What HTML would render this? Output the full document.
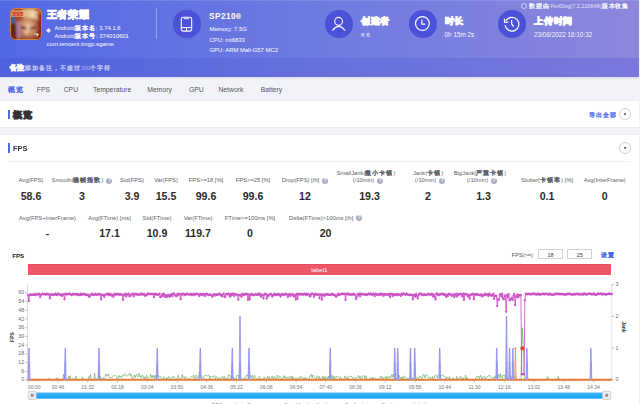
<!DOCTYPE html>
<html><head><meta charset="utf-8"><style>
html,body{margin:0;padding:0;}
body{width:640px;height:404px;overflow:hidden;position:relative;background:#f2f3f8;font-family:"Liberation Sans", sans-serif;}
.t{position:absolute;white-space:nowrap;}
svg{display:block;}
.cj{font-size:1.1em;letter-spacing:0.159em;-webkit-text-stroke:0.4px currentColor;}
.b .cj{font-size:1.2em;letter-spacing:0.083em;-webkit-text-stroke:0.9px currentColor;}
.q{display:inline-block;width:6px;height:6px;border-radius:50%;background:#a9aec2;color:#fff;font-size:4.6px;line-height:6px;text-align:center;vertical-align:middle;margin-left:3px;font-weight:bold;}
</style></head><body>
<div style="position:absolute;left:0;top:0;width:639px;height:58px;background:linear-gradient(90deg,#5368e4 0%,#6e7ae0 48%,#8c87dc 100%);"></div>
<div style="position:absolute;left:0;top:0;width:639px;height:1px;background:rgba(255,255,255,0.12);"></div>
<div style="position:absolute;left:0;top:58px;width:639px;height:19px;background:linear-gradient(90deg,#4e61dc 0%,#6670dc 48%,#7a78dc 100%);"></div>
<div style="position:absolute;left:10px;top:8px;width:32px;height:32px;"><svg width="32" height="32" viewBox="0 0 32 32"><defs><filter id="bl" x="-20%" y="-20%" width="140%" height="140%"><feGaussianBlur stdDeviation="0.9"/></filter><clipPath id="ic"><rect x="0" y="0" width="32" height="32" rx="5.5"/></clipPath><radialGradient id="face" cx="0.5" cy="0.4" r="0.6"><stop offset="0" stop-color="#f0d0b0"/><stop offset="0.5" stop-color="#d09068"/><stop offset="1" stop-color="#8a4a30"/></radialGradient><linearGradient id="hair" x1="0" y1="0" x2="1" y2="0"><stop offset="0" stop-color="#d8a870"/><stop offset="0.6" stop-color="#f0d8b0"/><stop offset="1" stop-color="#b86840"/></linearGradient><linearGradient id="bgc" x1="0" y1="0" x2="1" y2="1"><stop offset="0" stop-color="#9a3820"/><stop offset="0.5" stop-color="#b04a28"/><stop offset="1" stop-color="#8a2a18"/></linearGradient></defs><g clip-path="url(#ic)"><g filter="url(#bl)"><rect x="-2" y="-2" width="36" height="36" fill="url(#bgc)"/><path d="M0 8 L5 8 L5 15 L0 16 Z" fill="#4a5aa0"/><path d="M0 16 L6 15 L7 34 L0 34 Z" fill="#6a2414"/><path d="M12 2 Q22 -1 30 4 L31 14 Q24 10 14 12 Z" fill="url(#hair)"/><path d="M8 14 Q10 9 17 10 L26 11 Q29 18 27 26 Q24 33 17 33 Q9 31 8 23 Z" fill="url(#face)"/><path d="M6 14 L10 13 L11 29 L7 31 Z" fill="#b088b8" opacity="0.75"/><path d="M11 18 L17 19.5 L16 21.5 L11 20.5 Z" fill="#5a2018"/><path d="M20 19.5 L26 18 L26 20.5 L20 21.5 Z" fill="#5a2a20"/><path d="M15 22 L18 21 L18 26 L15 26 Z" fill="#e8c0a0"/><path d="M13 28 Q18 30 23 27.5 L22 31 Q18 32 14 31 Z" fill="#a85a44"/><path d="M28 6 L34 4 L34 34 L25 34 Q30 22 28 6 Z" fill="#8a2614"/></g><path d="M1.5 2 L15.5 2 L14.5 9 L0.5 9 Z" fill="#f0c890" opacity="0.55"/><text x="2.5" y="8" font-size="6.2" font-weight="bold" font-style="italic" fill="#e02e1a" font-family="Liberation Sans">5V5</text><path d="M23.5 25 L29 26 L26.5 30 L27 27.5 Z" fill="#f4eaea" opacity="0.9"/></g><rect x="0.4" y="0.4" width="31.2" height="31.2" rx="5.5" fill="none" stroke="#e89a48" stroke-width="0.8"/></svg></div>
<div class="t b" style="left:46.60px;top:10.14px;font-size:8px;line-height:9.60px;color:#ffffff;font-weight:bold;"><span class="cj">王者荣耀</span></div>
<div style="position:absolute;left:46px;top:27.5px;width:5px;height:5px;"><svg width="5" height="5" viewBox="0 0 5 5"><path d="M2.5 0 L5 2.5 L2.5 5 L0 2.5 Z" fill="rgba(255,255,255,0.85)"/></svg></div>
<div class="t" style="left:54.60px;top:24.24px;font-size:5.9px;line-height:7.08px;color:#ffffff;font-weight:normal;">Android<span class="cj">版本名</span>: 3.74.1.6</div>
<div class="t" style="left:54.60px;top:31.74px;font-size:5.9px;line-height:7.08px;color:#ffffff;font-weight:normal;">Android<span class="cj">版本号</span>: 374010601</div>
<div class="t" style="left:46.60px;top:41.08px;font-size:6.0px;line-height:7.20px;color:#ffffff;font-weight:normal;">com.tencent.tmgp.sgame</div>
<div style="position:absolute;left:156px;top:8px;width:1px;height:31px;background:rgba(255,255,255,0.35);"></div>
<div style="position:absolute;left:173.30px;top:10.30px;width:27.4px;height:27.4px;border-radius:50%;background:#4b52d9;"><svg width="27.4" height="27.4" viewBox="0 0 27.4 27.4" style="position:absolute;left:0;top:0"><rect x="8.3" y="7.2" width="10.4" height="13.9" rx="1.8" fill="none" stroke="#fff" stroke-width="1.1"/><line x1="10.6" y1="8.7" x2="16.1" y2="8.7" stroke="#fff" stroke-width="0.9"/><line x1="8.3" y1="17.6" x2="18.7" y2="17.6" stroke="#fff" stroke-width="1"/><line x1="13.5" y1="17.6" x2="13.5" y2="21" stroke="#fff" stroke-width="1"/></svg></div>
<div class="t b" style="left:209.10px;top:12.13px;font-size:8.2px;line-height:9.84px;color:#ffffff;font-weight:bold;letter-spacing:0.5px;">SP210</div>
<div style="position:absolute;left:235.6px;top:13.2px;width:5.6px;height:5.6px;border-radius:50%;background:#c9c6d0;"></div>
<div class="t" style="left:209.50px;top:26.44px;font-size:5.9px;line-height:7.08px;color:#ffffff;font-weight:normal;">Memory: 7.5G</div>
<div class="t" style="left:209.50px;top:36.94px;font-size:5.9px;line-height:7.08px;color:#ffffff;font-weight:normal;">CPU: mt6833</div>
<div class="t" style="left:209.50px;top:46.84px;font-size:5.9px;line-height:7.08px;color:#ffffff;font-weight:normal;">GPU: ARM Mali-G57 MC2</div>
<div style="position:absolute;left:325.20px;top:10.30px;width:27.4px;height:27.4px;border-radius:50%;background:#4b52d9;"><svg width="27.4" height="27.4" viewBox="0 0 27.4 27.4" style="position:absolute;left:0;top:0"><circle cx="13.6" cy="11.3" r="3.9" fill="none" stroke="#fff" stroke-width="1.1"/><path d="M7.6 20.3 Q13.6 12.5 19.8 20.3" fill="none" stroke="#fff" stroke-width="1.1" stroke-linecap="round"/></svg></div>
<div class="t b" style="left:360.90px;top:16.91px;font-size:7.7px;line-height:9.24px;color:#ffffff;font-weight:bold;"><span class="cj">创建者</span></div>
<div class="t" style="left:360.90px;top:30.87px;font-size:6.2px;line-height:7.44px;color:#ffffff;font-weight:normal;">б б</div>
<div style="position:absolute;left:409.20px;top:10.30px;width:27.4px;height:27.4px;border-radius:50%;background:#4b52d9;"><svg width="27.4" height="27.4" viewBox="0 0 27.4 27.4" style="position:absolute;left:0;top:0"><circle cx="13.4" cy="13.5" r="6.9" fill="none" stroke="#fff" stroke-width="1.2"/><path d="M12.9 9.6 L12.9 14.1 L16.2 14.1" fill="none" stroke="#fff" stroke-width="1.2"/></svg></div>
<div class="t b" style="left:444.60px;top:16.91px;font-size:7.7px;line-height:9.24px;color:#ffffff;font-weight:bold;"><span class="cj">时长</span></div>
<div class="t" style="left:444.60px;top:30.98px;font-size:6.35px;line-height:7.62px;color:rgba(255,255,255,0.95);font-weight:normal;">0h 15m 2s</div>
<div style="position:absolute;left:498.40px;top:10.30px;width:27.4px;height:27.4px;border-radius:50%;background:#4b52d9;"><svg width="27.4" height="27.4" viewBox="0 0 27.4 27.4" style="position:absolute;left:0;top:0"><path d="M8.2 10.4 A6.9 6.9 0 1 1 7.2 15.6" fill="none" stroke="#fff" stroke-width="1.2" stroke-linecap="round"/><path d="M6.4 8.6 L6.6 12.4 L10.3 12.2" fill="none" stroke="#fff" stroke-width="1.2"/><path d="M13.6 10 L13.8 14.2 L15.8 16.6" fill="none" stroke="#fff" stroke-width="1.2"/></svg></div>
<div class="t b" style="left:534.00px;top:16.91px;font-size:7.7px;line-height:9.24px;color:#ffffff;font-weight:bold;"><span class="cj">上传时间</span></div>
<div class="t" style="left:534.00px;top:30.98px;font-size:6.35px;line-height:7.62px;color:rgba(255,255,255,0.95);font-weight:normal;">23/08/2022 16:10:32</div>
<div style="position:absolute;left:521.3px;top:3.2px;width:4px;height:4px;border-radius:50%;border:0.6px solid rgba(255,255,255,0.6);"></div>
<div class="t" style="left:529.30px;top:3.37px;font-size:5.5px;line-height:6.60px;color:rgba(255,255,255,0.8);font-weight:normal;word-spacing:0;"><span class="cj">数据由</span>PerfDog(7.2.220648)<span class="cj">版本收集</span></div>
<div class="t b" style="left:9.75px;top:65.36px;font-size:5.6px;line-height:6.72px;color:#ffffff;font-weight:bold;"><span class="cj">备注</span>:</div>
<div class="t" style="left:25.30px;top:65.36px;font-size:5.6px;line-height:6.72px;color:rgba(255,255,255,0.5);font-weight:normal;"><span class="cj">添加备注，不超过</span>200<span class="cj">个字符</span></div>
<div style="position:absolute;left:0;top:77px;width:639px;height:3px;background:linear-gradient(#dedff2,#f2f3f8);"></div>
<div class="t" style="left:8.20px;top:86.12px;font-size:6.8px;line-height:8.16px;color:#4d6ae6;font-weight:normal;"><span class="cj">概览</span></div>
<div class="t" style="left:36.80px;top:86.12px;font-size:6.8px;line-height:8.16px;color:#555;font-weight:normal;">FPS</div>
<div class="t" style="left:63.70px;top:86.12px;font-size:6.8px;line-height:8.16px;color:#555;font-weight:normal;">CPU</div>
<div class="t" style="left:93.00px;top:86.12px;font-size:6.8px;line-height:8.16px;color:#555;font-weight:normal;">Temperature</div>
<div class="t" style="left:147.30px;top:86.12px;font-size:6.8px;line-height:8.16px;color:#555;font-weight:normal;">Memory</div>
<div class="t" style="left:189.00px;top:86.12px;font-size:6.8px;line-height:8.16px;color:#555;font-weight:normal;">GPU</div>
<div class="t" style="left:218.40px;top:86.12px;font-size:6.8px;line-height:8.16px;color:#555;font-weight:normal;">Network</div>
<div class="t" style="left:260.70px;top:86.12px;font-size:6.8px;line-height:8.16px;color:#555;font-weight:normal;">Battery</div>
<div style="position:absolute;left:0;top:100px;width:639px;height:1px;background:#ededf4;"></div>
<div style="position:absolute;left:0;top:101px;width:639px;height:26px;background:#fff;"></div>
<div style="position:absolute;left:0;top:127px;width:639px;height:1px;background:#e8e9f4;"></div>
<div style="position:absolute;left:0;top:134px;width:639px;height:1px;background:#ebecf5;"></div>
<div style="position:absolute;left:8px;top:110px;width:2px;height:9.2px;background:#4d6ae6;"></div>
<div class="t b" style="left:13.00px;top:111.22px;font-size:7.5px;line-height:9.00px;color:#333;font-weight:bold;"><span class="cj">概览</span></div>
<div class="t" style="left:589.20px;top:112.18px;font-size:5.3px;line-height:6.36px;color:#5a78f0;font-weight:normal;"><span class="cj">导出全部</span></div>
<div style="position:absolute;left:619.30px;top:108.40px;width:12px;height:12px;"><svg width="12" height="12" viewBox="0 0 12 12"><circle cx="6" cy="6" r="5.5" fill="#fff" stroke="#c4c4c8" stroke-width="0.8"/><path d="M4.6 6 L6.6 4.6 L6.6 7.4 Z" fill="#333"/></svg></div>
<div style="position:absolute;left:0;top:135px;width:639px;height:269px;background:#fff;"></div>
<div style="position:absolute;left:8px;top:142.6px;width:2px;height:10px;background:#4d6ae6;"></div>
<div class="t b" style="left:13.00px;top:143.64px;font-size:8px;line-height:9.60px;color:#333;font-weight:bold;transform:scaleX(0.92);transform-origin:left;">FPS</div>
<div style="position:absolute;left:619.30px;top:141.80px;width:12px;height:12px;"><svg width="12" height="12" viewBox="0 0 12 12"><circle cx="6" cy="6" r="5.5" fill="#fff" stroke="#c4c4c8" stroke-width="0.8"/><path d="M4.6 5.2 L7.4 5.2 L6 7.2 Z" fill="#333"/></svg></div>
<div style="position:absolute;left:8px;top:160.5px;width:623px;height:1px;background:#eeeef2;"></div>
<div class="t" style="left:-269.00px;width:600px;text-align:center;top:177.49px;font-size:5.8px;line-height:6.96px;color:#5c6068;font-weight:normal;">Avg(FPS)</div>
<div class="t b" style="left:-269.00px;width:600px;text-align:center;top:189.91px;font-size:10.6px;line-height:12.72px;color:#2b2b2b;font-weight:bold;">58.6</div>
<div class="t" style="left:-218.00px;width:600px;text-align:center;top:177.49px;font-size:5.8px;line-height:6.96px;color:#5c6068;font-weight:normal;">Smooth(<span class="cj">稳帧指数</span>)<span class="q">?</span></div>
<div class="t b" style="left:-218.00px;width:600px;text-align:center;top:189.91px;font-size:10.6px;line-height:12.72px;color:#2b2b2b;font-weight:bold;">3</div>
<div class="t" style="left:-168.00px;width:600px;text-align:center;top:177.49px;font-size:5.8px;line-height:6.96px;color:#5c6068;font-weight:normal;">Std(FPS)</div>
<div class="t b" style="left:-168.00px;width:600px;text-align:center;top:189.91px;font-size:10.6px;line-height:12.72px;color:#2b2b2b;font-weight:bold;">3.9</div>
<div class="t" style="left:-134.00px;width:600px;text-align:center;top:177.49px;font-size:5.8px;line-height:6.96px;color:#5c6068;font-weight:normal;">Var(FPS)</div>
<div class="t b" style="left:-134.00px;width:600px;text-align:center;top:189.91px;font-size:10.6px;line-height:12.72px;color:#2b2b2b;font-weight:bold;">15.5</div>
<div class="t" style="left:-94.00px;width:600px;text-align:center;top:177.49px;font-size:5.8px;line-height:6.96px;color:#5c6068;font-weight:normal;">FPS&gt;=18 [%]</div>
<div class="t b" style="left:-94.00px;width:600px;text-align:center;top:189.91px;font-size:10.6px;line-height:12.72px;color:#2b2b2b;font-weight:bold;">99.6</div>
<div class="t" style="left:-47.00px;width:600px;text-align:center;top:177.49px;font-size:5.8px;line-height:6.96px;color:#5c6068;font-weight:normal;">FPS&gt;=25 [%]</div>
<div class="t b" style="left:-47.00px;width:600px;text-align:center;top:189.91px;font-size:10.6px;line-height:12.72px;color:#2b2b2b;font-weight:bold;">99.6</div>
<div class="t" style="left:5.00px;width:600px;text-align:center;top:177.49px;font-size:5.8px;line-height:6.96px;color:#5c6068;font-weight:normal;">Drop(FPS) [/h]<span class="q">?</span></div>
<div class="t b" style="left:5.00px;width:600px;text-align:center;top:189.91px;font-size:10.6px;line-height:12.72px;color:#2b2b2b;font-weight:bold;">12</div>
<div class="t" style="left:66.00px;width:600px;text-align:center;top:169.99px;font-size:5.8px;line-height:6.96px;color:#5c6068;font-weight:normal;">SmallJank(<span class="cj">微小卡顿</span>)</div>
<div class="t" style="left:68.00px;width:600px;text-align:center;top:177.49px;font-size:5.8px;line-height:6.96px;color:#5c6068;font-weight:normal;">(/10min)<span class="q">?</span></div>
<div class="t b" style="left:69.50px;width:600px;text-align:center;top:189.91px;font-size:10.6px;line-height:12.72px;color:#2b2b2b;font-weight:bold;">19.3</div>
<div class="t" style="left:128.00px;width:600px;text-align:center;top:169.99px;font-size:5.8px;line-height:6.96px;color:#5c6068;font-weight:normal;">Jank(<span class="cj">卡顿</span>)</div>
<div class="t" style="left:130.00px;width:600px;text-align:center;top:177.49px;font-size:5.8px;line-height:6.96px;color:#5c6068;font-weight:normal;">(/10min)<span class="q">?</span></div>
<div class="t b" style="left:128.00px;width:600px;text-align:center;top:189.91px;font-size:10.6px;line-height:12.72px;color:#2b2b2b;font-weight:bold;">2</div>
<div class="t" style="left:180.00px;width:600px;text-align:center;top:169.99px;font-size:5.8px;line-height:6.96px;color:#5c6068;font-weight:normal;">BigJank(<span class="cj">严重卡顿</span>)</div>
<div class="t" style="left:182.00px;width:600px;text-align:center;top:177.49px;font-size:5.8px;line-height:6.96px;color:#5c6068;font-weight:normal;">(/10min)<span class="q">?</span></div>
<div class="t b" style="left:183.50px;width:600px;text-align:center;top:189.91px;font-size:10.6px;line-height:12.72px;color:#2b2b2b;font-weight:bold;">1.3</div>
<div class="t" style="left:247.00px;width:600px;text-align:center;top:177.49px;font-size:5.8px;line-height:6.96px;color:#5c6068;font-weight:normal;">Stutter(<span class="cj">卡顿率</span>) [%]</div>
<div class="t b" style="left:247.00px;width:600px;text-align:center;top:189.91px;font-size:10.6px;line-height:12.72px;color:#2b2b2b;font-weight:bold;">0.1</div>
<div class="t" style="left:304.70px;width:600px;text-align:center;top:177.49px;font-size:5.8px;line-height:6.96px;color:#5c6068;font-weight:normal;">Avg(InterFrame)</div>
<div class="t b" style="left:304.70px;width:600px;text-align:center;top:189.91px;font-size:10.6px;line-height:12.72px;color:#2b2b2b;font-weight:bold;">0</div>
<div class="t" style="left:-252.50px;width:600px;text-align:center;top:214.99px;font-size:5.8px;line-height:6.96px;color:#5c6068;font-weight:normal;">Avg(FPS+InterFrame)</div>
<div class="t b" style="left:-252.50px;width:600px;text-align:center;top:226.91px;font-size:10.6px;line-height:12.72px;color:#2b2b2b;font-weight:bold;">-</div>
<div class="t" style="left:-190.50px;width:600px;text-align:center;top:214.99px;font-size:5.8px;line-height:6.96px;color:#5c6068;font-weight:normal;">Avg(FTime) [ms]</div>
<div class="t b" style="left:-190.50px;width:600px;text-align:center;top:226.91px;font-size:10.6px;line-height:12.72px;color:#2b2b2b;font-weight:bold;">17.1</div>
<div class="t" style="left:-143.00px;width:600px;text-align:center;top:214.99px;font-size:5.8px;line-height:6.96px;color:#5c6068;font-weight:normal;">Std(FTime)</div>
<div class="t b" style="left:-143.00px;width:600px;text-align:center;top:226.91px;font-size:10.6px;line-height:12.72px;color:#2b2b2b;font-weight:bold;">10.9</div>
<div class="t" style="left:-102.00px;width:600px;text-align:center;top:214.99px;font-size:5.8px;line-height:6.96px;color:#5c6068;font-weight:normal;">Var(FTime)</div>
<div class="t b" style="left:-102.00px;width:600px;text-align:center;top:226.91px;font-size:10.6px;line-height:12.72px;color:#2b2b2b;font-weight:bold;">119.7</div>
<div class="t" style="left:-50.00px;width:600px;text-align:center;top:214.99px;font-size:5.8px;line-height:6.96px;color:#5c6068;font-weight:normal;">FTime&gt;=100ms [%]</div>
<div class="t b" style="left:-50.00px;width:600px;text-align:center;top:226.91px;font-size:10.6px;line-height:12.72px;color:#2b2b2b;font-weight:bold;">0</div>
<div class="t" style="left:25.60px;width:600px;text-align:center;top:214.99px;font-size:5.8px;line-height:6.96px;color:#5c6068;font-weight:normal;">Delta(FTime)&gt;100ms [/h]<span class="q">?</span></div>
<div class="t b" style="left:25.60px;width:600px;text-align:center;top:226.91px;font-size:10.6px;line-height:12.72px;color:#2b2b2b;font-weight:bold;">20</div>
<div class="t b" style="left:12.20px;top:251.57px;font-size:6.2px;line-height:7.44px;color:#1a1a1a;font-weight:bold;">FPS</div>
<div class="t" style="left:511.80px;top:251.61px;font-size:5.6px;line-height:6.72px;color:#555;font-weight:normal;">FPS(&gt;=)</div>
<div style="position:absolute;left:537.6px;top:249.4px;width:25.5px;height:9.3px;box-sizing:border-box;border:0.8px solid #d0d0d0;background:#fff;"></div>
<div class="t" style="left:250.50px;width:600px;text-align:center;top:251.72px;font-size:5.4px;line-height:6.48px;color:#333;font-weight:normal;">18</div>
<div style="position:absolute;left:566.9px;top:249.4px;width:25.5px;height:9.3px;box-sizing:border-box;border:0.8px solid #d0d0d0;background:#fff;"></div>
<div class="t" style="left:279.80px;width:600px;text-align:center;top:251.72px;font-size:5.4px;line-height:6.48px;color:#333;font-weight:normal;">25</div>
<div class="t" style="left:600.60px;top:251.84px;font-size:5.2px;line-height:6.24px;color:#3a64f0;font-weight:normal;"><span class="cj">设置</span></div>
<div style="position:absolute;left:27.7px;top:264.4px;width:583px;height:10.7px;background:#ef5668;border-top:1px solid #e84a5e;box-sizing:border-box;"></div>
<div class="t" style="left:19.30px;width:600px;text-align:center;top:266.78px;font-size:6px;line-height:7.20px;color:#fff;font-weight:normal;">label1</div>
<svg style="position:absolute;left:0;top:0" width="640" height="404" viewBox="0 0 640 404"><line x1="27.5" y1="284" x2="27.5" y2="380" stroke="#dde0ea" stroke-width="1"/><line x1="611.8" y1="284" x2="611.8" y2="380" stroke="#dde0ea" stroke-width="1"/><line x1="25" y1="380.00" x2="27.5" y2="380.00" stroke="#aaa" stroke-width="0.6"/><line x1="25" y1="371.29" x2="27.5" y2="371.29" stroke="#aaa" stroke-width="0.6"/><line x1="25" y1="362.58" x2="27.5" y2="362.58" stroke="#aaa" stroke-width="0.6"/><line x1="25" y1="353.87" x2="27.5" y2="353.87" stroke="#aaa" stroke-width="0.6"/><line x1="25" y1="345.16" x2="27.5" y2="345.16" stroke="#aaa" stroke-width="0.6"/><line x1="25" y1="336.45" x2="27.5" y2="336.45" stroke="#aaa" stroke-width="0.6"/><line x1="25" y1="327.74" x2="27.5" y2="327.74" stroke="#aaa" stroke-width="0.6"/><line x1="25" y1="319.03" x2="27.5" y2="319.03" stroke="#aaa" stroke-width="0.6"/><line x1="25" y1="310.32" x2="27.5" y2="310.32" stroke="#aaa" stroke-width="0.6"/><line x1="25" y1="301.61" x2="27.5" y2="301.61" stroke="#aaa" stroke-width="0.6"/><line x1="25" y1="292.90" x2="27.5" y2="292.90" stroke="#aaa" stroke-width="0.6"/><line x1="611.8" y1="380.00" x2="614.3" y2="380.00" stroke="#aaa" stroke-width="0.6"/><line x1="611.8" y1="348.20" x2="614.3" y2="348.20" stroke="#aaa" stroke-width="0.6"/><line x1="611.8" y1="316.40" x2="614.3" y2="316.40" stroke="#aaa" stroke-width="0.6"/><line x1="611.8" y1="284.60" x2="614.3" y2="284.60" stroke="#aaa" stroke-width="0.6"/><line x1="28.25" y1="380" x2="28.25" y2="383" stroke="#bbb" stroke-width="0.6"/><line x1="58.00" y1="380" x2="58.00" y2="383" stroke="#bbb" stroke-width="0.6"/><line x1="87.75" y1="380" x2="87.75" y2="383" stroke="#bbb" stroke-width="0.6"/><line x1="117.50" y1="380" x2="117.50" y2="383" stroke="#bbb" stroke-width="0.6"/><line x1="147.25" y1="380" x2="147.25" y2="383" stroke="#bbb" stroke-width="0.6"/><line x1="177.00" y1="380" x2="177.00" y2="383" stroke="#bbb" stroke-width="0.6"/><line x1="206.75" y1="380" x2="206.75" y2="383" stroke="#bbb" stroke-width="0.6"/><line x1="236.50" y1="380" x2="236.50" y2="383" stroke="#bbb" stroke-width="0.6"/><line x1="266.25" y1="380" x2="266.25" y2="383" stroke="#bbb" stroke-width="0.6"/><line x1="296.00" y1="380" x2="296.00" y2="383" stroke="#bbb" stroke-width="0.6"/><line x1="325.75" y1="380" x2="325.75" y2="383" stroke="#bbb" stroke-width="0.6"/><line x1="355.50" y1="380" x2="355.50" y2="383" stroke="#bbb" stroke-width="0.6"/><line x1="385.25" y1="380" x2="385.25" y2="383" stroke="#bbb" stroke-width="0.6"/><line x1="415.00" y1="380" x2="415.00" y2="383" stroke="#bbb" stroke-width="0.6"/><line x1="444.75" y1="380" x2="444.75" y2="383" stroke="#bbb" stroke-width="0.6"/><line x1="474.50" y1="380" x2="474.50" y2="383" stroke="#bbb" stroke-width="0.6"/><line x1="504.25" y1="380" x2="504.25" y2="383" stroke="#bbb" stroke-width="0.6"/><line x1="534.00" y1="380" x2="534.00" y2="383" stroke="#bbb" stroke-width="0.6"/><line x1="563.75" y1="380" x2="563.75" y2="383" stroke="#bbb" stroke-width="0.6"/><line x1="593.50" y1="380" x2="593.50" y2="383" stroke="#bbb" stroke-width="0.6"/><polyline fill="none" stroke="#58a858" stroke-width="0.6" points="28.0,380.0 28.8,380.0 29.6,380.0 30.4,380.0 31.2,380.0 32.1,380.0 32.9,380.0 33.7,380.0 34.5,380.0 35.3,380.0 36.1,380.0 36.9,380.0 37.7,380.0 38.6,380.0 39.4,380.0 40.2,380.0 41.0,380.0 41.8,380.0 42.6,380.0 43.4,380.0 44.2,380.0 45.1,380.0 45.9,380.0 46.7,380.0 47.5,380.0 48.3,377.9 49.1,378.9 49.9,380.0 50.7,380.0 51.5,380.0 52.4,380.0 53.2,380.0 54.0,380.0 54.8,380.0 55.6,380.0 56.4,377.5 57.2,378.3 58.0,378.2 58.9,380.0 59.7,380.0 60.5,380.0 61.3,380.0 62.1,380.0 62.9,380.0 63.7,374.0 64.5,380.0 65.4,380.0 66.2,380.0 67.0,380.0 67.8,380.0 68.6,376.0 69.4,380.0 70.2,375.7 71.0,380.0 71.8,380.0 72.7,380.0 73.5,378.2 74.3,380.0 75.1,380.0 75.9,375.8 76.7,380.0 77.5,380.0 78.3,380.0 79.2,380.0 80.0,380.0 80.8,380.0 81.6,380.0 82.4,376.8 83.2,380.0 84.0,380.0 84.8,380.0 85.6,380.0 86.5,380.0 87.3,380.0 88.1,380.0 88.9,376.5 89.7,378.2 90.5,374.4 91.3,380.0 92.1,380.0 93.0,380.0 93.8,380.0 94.6,373.2 95.4,380.0 96.2,380.0 97.0,380.0 97.8,380.0 98.6,373.6 99.5,380.0 100.3,376.5 101.1,380.0 101.9,380.0 102.7,377.9 103.5,377.5 104.3,380.0 105.1,377.5 105.9,374.0 106.8,376.0 107.6,376.0 108.4,374.0 109.2,377.3 110.0,377.6 110.8,377.4 111.6,378.2 112.4,376.5 113.3,375.4 114.1,376.0 114.9,375.6 115.7,375.5 116.5,376.6 117.3,379.3 118.1,378.0 118.9,375.3 119.8,377.2 120.6,376.0 121.4,377.8 122.2,377.0 123.0,374.8 123.8,375.8 124.6,373.7 125.4,375.3 126.2,375.7 127.1,375.9 127.9,375.8 128.7,374.7 129.5,373.5 130.3,375.7 131.1,374.0 131.9,378.0 132.7,378.4 133.6,378.7 134.4,375.0 135.2,377.5 136.0,374.9 136.8,374.3 137.6,377.0 138.4,376.1 139.2,373.2 140.1,377.3 140.9,375.7 141.7,377.5 142.5,375.1 143.3,376.7 144.1,379.4 144.9,376.7 145.7,379.4 146.5,375.1 147.4,377.8 148.2,378.5 149.0,376.9 149.8,376.7 150.6,374.2 151.4,377.8 152.2,375.3 153.0,377.7 153.9,375.4 154.7,378.5 155.5,375.1 156.3,377.7 157.1,377.8 157.9,375.9 158.7,375.6 159.5,376.8 160.3,376.1 161.2,378.5 162.0,379.3 162.8,378.4 163.6,376.5 164.4,378.1 165.2,379.3 166.0,379.8 166.8,377.4 167.7,380.0 168.5,376.4 169.3,377.0 170.1,378.6 170.9,378.6 171.7,377.1 172.5,378.1 173.3,375.8 174.2,377.1 175.0,379.1 175.8,379.6 176.6,378.3 177.4,379.6 178.2,375.2 179.0,377.9 179.8,378.2 180.6,379.0 181.5,378.5 182.3,374.3 183.1,377.9 183.9,376.9 184.7,378.6 185.5,376.4 186.3,377.8 187.1,378.7 188.0,378.7 188.8,379.0 189.6,378.4 190.4,377.4 191.2,376.6 192.0,376.5 192.8,377.6 193.6,374.9 194.5,376.7 195.3,379.8 196.1,375.2 196.9,375.8 197.7,378.3 198.5,376.4 199.3,374.4 200.1,375.2 200.9,374.7 201.8,377.0 202.6,378.1 203.4,378.5 204.2,375.8 205.0,375.2 205.8,375.7 206.6,374.9 207.4,376.0 208.3,375.2 209.1,375.4 209.9,379.0 210.7,376.2 211.5,376.5 212.3,377.1 213.1,377.3 213.9,375.6 214.8,376.1 215.6,379.1 216.4,376.5 217.2,377.7 218.0,380.0 218.8,377.7 219.6,377.4 220.4,378.5 221.2,378.7 222.1,376.6 222.9,376.2 223.7,380.0 224.5,376.4 225.3,377.5 226.1,379.1 226.9,378.4 227.7,378.6 228.6,374.6 229.4,375.8 230.2,375.4 231.0,378.4 231.8,376.5 232.6,379.6 233.4,377.4 234.2,379.2 235.1,378.6 235.9,379.7 236.7,375.2 237.5,375.3 238.3,375.1 239.1,378.0 239.9,375.1 240.7,378.1 241.5,378.6 242.4,380.0 243.2,378.7 244.0,378.3 244.8,377.3 245.6,378.5 246.4,375.3 247.2,376.1 248.0,374.0 248.9,375.0 249.7,375.6 250.5,375.5 251.3,377.6 252.1,375.1 252.9,377.9 253.7,379.0 254.5,375.3 255.3,377.2 256.2,378.0 257.0,380.0 257.8,380.0 258.6,378.0 259.4,376.4 260.2,377.9 261.0,379.7 261.8,379.3 262.7,379.8 263.5,378.2 264.3,376.8 265.1,378.5 265.9,378.7 266.7,380.0 267.5,376.2 268.3,378.5 269.2,376.6 270.0,379.7 270.8,379.0 271.6,376.3 272.4,376.2 273.2,380.0 274.0,376.3 274.8,377.9 275.6,379.1 276.5,376.3 277.3,375.1 278.1,379.7 278.9,378.2 279.7,375.8 280.5,377.0 281.3,377.5 282.1,379.5 283.0,378.1 283.8,375.5 284.6,378.3 285.4,376.2 286.2,378.5 287.0,377.1 287.8,377.6 288.6,377.0 289.5,379.2 290.3,376.0 291.1,376.1 291.9,379.4 292.7,376.2 293.5,379.1 294.3,378.6 295.1,378.7 295.9,377.7 296.8,379.3 297.6,379.3 298.4,377.6 299.2,377.1 300.0,378.2 300.8,376.2 301.6,377.0 302.4,379.9 303.3,379.2 304.1,377.5 304.9,379.3 305.7,377.3 306.5,379.2 307.3,379.0 308.1,378.7 308.9,379.7 309.8,375.7 310.6,376.0 311.4,374.3 312.2,378.2 313.0,374.8 313.8,375.9 314.6,377.5 315.4,378.8 316.2,379.0 317.1,375.8 317.9,376.3 318.7,379.3 319.5,376.5 320.3,380.0 321.1,378.8 321.9,379.1 322.7,375.8 323.6,378.9 324.4,376.7 325.2,380.0 326.0,376.5 326.8,377.3 327.6,378.8 328.4,376.0 329.2,379.3 330.0,378.7 330.9,380.0 331.7,375.7 332.5,375.4 333.3,379.6 334.1,376.0 334.9,378.2 335.7,378.4 336.5,375.9 337.4,377.0 338.2,376.5 339.0,377.2 339.8,378.9 340.6,376.8 341.4,380.0 342.2,379.4 343.0,380.0 343.9,379.3 344.7,375.9 345.5,378.2 346.3,379.7 347.1,376.6 347.9,379.1 348.7,377.3 349.5,376.4 350.3,376.3 351.2,376.0 352.0,377.6 352.8,377.0 353.6,379.8 354.4,380.0 355.2,377.6 356.0,378.8 356.8,377.5 357.7,376.4 358.5,375.3 359.3,378.4 360.1,376.1 360.9,379.5 361.7,379.4 362.5,375.6 363.3,375.7 364.2,376.2 365.0,379.3 365.8,375.5 366.6,377.8 367.4,379.5 368.2,380.0 369.0,379.8 369.8,377.7 370.6,380.0 371.5,377.7 372.3,379.5 373.1,377.1 373.9,380.0 374.7,379.1 375.5,377.8 376.3,380.0 377.1,378.7 378.0,379.5 378.8,378.8 379.6,378.5 380.4,376.1 381.2,377.9 382.0,376.5 382.8,380.0 383.6,377.9 384.5,377.5 385.3,376.7 386.1,379.3 386.9,376.2 387.7,378.3 388.5,376.7 389.3,377.8 390.1,376.3 390.9,377.7 391.8,374.3 392.6,377.1 393.4,374.0 394.2,375.7 395.0,374.2 395.8,374.5 396.6,374.7 397.4,375.4 398.3,377.6 399.1,375.1 399.9,378.5 400.7,377.2 401.5,379.3 402.3,376.7 403.1,379.5 403.9,375.9 404.7,376.2 405.6,377.9 406.4,377.7 407.2,378.9 408.0,378.8 408.8,378.5 409.6,380.0 410.4,378.2 411.2,377.2 412.1,378.3 412.9,378.7 413.7,380.0 414.5,380.0 415.3,378.5 416.1,377.9 416.9,377.4 417.7,378.1 418.6,378.5 419.4,376.3 420.2,376.8 421.0,376.7 421.8,378.9 422.6,376.7 423.4,374.0 424.2,375.1 425.0,378.0 425.9,374.8 426.7,374.6 427.5,375.4 428.3,377.4 429.1,378.3 429.9,377.1 430.7,379.7 431.5,379.6 432.4,376.4 433.2,378.3 434.0,378.2 434.8,375.5 435.6,374.6 436.4,375.9 437.2,377.7 438.0,375.0 438.9,374.3 439.7,373.7 440.5,376.7 441.3,375.9 442.1,374.9 442.9,375.2 443.7,376.4 444.5,376.0 445.3,377.1 446.2,379.2 447.0,376.8 447.8,377.5 448.6,378.8 449.4,376.6 450.2,380.0 451.0,380.0 451.8,379.8 452.7,377.9 453.5,377.9 454.3,380.0 455.1,379.2 455.9,380.0 456.7,376.4 457.5,378.3 458.3,380.0 459.2,377.6 460.0,377.4 460.8,376.1 461.6,379.1 462.4,379.6 463.2,377.7 464.0,379.8 464.8,379.7 465.6,375.0 466.5,379.2 467.3,377.5 468.1,380.0 468.9,380.0 469.7,380.0 470.5,380.0 471.3,380.0 472.1,380.0 473.0,380.0 473.8,380.0 474.6,380.0 475.4,380.0 476.2,376.8 477.0,376.2 477.8,377.3 478.6,376.2 479.5,378.8 480.3,375.1 481.1,375.9 481.9,379.7 482.7,377.3 483.5,376.7 484.3,376.3 485.1,379.7 485.9,377.2 486.8,376.7 487.6,377.0 488.4,375.4 489.2,376.1 490.0,375.3 490.8,377.3 491.6,377.8 492.4,377.4 493.3,378.3 494.1,376.5 494.9,378.6 495.7,375.9 496.5,375.7 497.3,378.5 498.1,376.9 498.9,374.2 499.7,377.8 500.6,373.6 501.4,377.6 502.2,378.0 503.0,375.0 503.8,375.6 504.6,375.2 505.4,378.1 506.2,375.4 507.1,378.0 507.9,379.6 508.7,378.7 509.5,377.9 510.3,375.3 511.1,375.8 511.9,379.7 512.7,377.8 513.6,377.9 514.4,376.6 515.2,375.4 516.0,376.2 516.8,380.0 517.6,380.0 518.4,380.0 519.2,380.0 520.0,380.0 520.9,380.0 521.7,351.0 522.5,327.7 523.3,345.2 524.1,371.3 524.9,380.0 525.7,380.0 526.5,380.0 527.4,380.0 528.2,380.0 529.0,380.0 529.8,380.0 530.6,380.0 531.4,380.0 532.2,380.0 533.0,380.0 533.9,380.0 534.7,380.0 535.5,380.0 536.3,380.0 537.1,380.0 537.9,380.0 538.7,380.0 539.5,380.0 540.3,380.0 541.2,380.0 542.0,380.0 542.8,380.0 543.6,380.0 544.4,380.0 545.2,380.0 546.0,380.0 546.8,380.0 547.7,376.4 548.5,380.0 549.3,380.0 550.1,380.0 550.9,380.0 551.7,380.0 552.5,380.0 553.3,380.0 554.2,380.0 555.0,380.0 555.8,380.0 556.6,380.0 557.4,380.0 558.2,376.4 559.0,380.0 559.8,380.0 560.6,380.0 561.5,380.0 562.3,380.0 563.1,380.0 563.9,380.0 564.7,380.0 565.5,380.0 566.3,380.0 567.1,380.0 568.0,380.0 568.8,380.0 569.6,380.0 570.4,380.0 571.2,380.0 572.0,380.0 572.8,380.0 573.6,380.0 574.4,380.0 575.3,380.0 576.1,380.0 576.9,380.0 577.7,380.0 578.5,380.0 579.3,380.0 580.1,380.0 580.9,380.0 581.8,380.0 582.6,380.0 583.4,380.0 584.2,380.0 585.0,380.0 585.8,380.0 586.6,380.0 587.4,380.0 588.3,380.0 589.1,380.0 589.9,380.0 590.7,380.0 591.5,380.0 592.3,380.0 593.1,380.0 593.9,380.0 594.7,380.0 595.6,380.0 596.4,380.0 597.2,380.0 598.0,380.0 598.8,380.0 599.6,380.0 600.4,380.0 601.2,380.0 602.1,380.0 602.9,380.0 603.7,380.0 604.5,380.0 605.3,380.0 606.1,380.0 606.9,380.0 607.7,380.0 608.6,380.0 609.4,380.0 610.2,380.0 611.0,380.0 611.8,380.0"/><line x1="28" y1="379.7" x2="611.8" y2="379.7" stroke="#ea8a4c" stroke-width="1.9"/><circle cx="28.0" cy="379.7" r="0.9" fill="#e07a38"/><circle cx="30.3" cy="379.7" r="0.9" fill="#e07a38"/><circle cx="32.7" cy="379.7" r="0.9" fill="#e07a38"/><circle cx="35.0" cy="379.7" r="0.9" fill="#e07a38"/><circle cx="37.4" cy="379.7" r="0.9" fill="#e07a38"/><circle cx="39.7" cy="379.7" r="0.9" fill="#e07a38"/><circle cx="42.0" cy="379.7" r="0.9" fill="#e07a38"/><circle cx="44.4" cy="379.7" r="0.9" fill="#e07a38"/><circle cx="46.7" cy="379.7" r="0.9" fill="#e07a38"/><circle cx="49.1" cy="379.7" r="0.9" fill="#e07a38"/><circle cx="51.4" cy="379.7" r="0.9" fill="#e07a38"/><circle cx="53.7" cy="379.7" r="0.9" fill="#e07a38"/><circle cx="56.1" cy="379.7" r="0.9" fill="#e07a38"/><circle cx="58.4" cy="379.7" r="0.9" fill="#e07a38"/><circle cx="60.8" cy="379.7" r="0.9" fill="#e07a38"/><circle cx="63.1" cy="379.7" r="0.9" fill="#e07a38"/><circle cx="65.4" cy="379.7" r="0.9" fill="#e07a38"/><circle cx="67.8" cy="379.7" r="0.9" fill="#e07a38"/><circle cx="70.1" cy="379.7" r="0.9" fill="#e07a38"/><circle cx="72.5" cy="379.7" r="0.9" fill="#e07a38"/><circle cx="74.8" cy="379.7" r="0.9" fill="#e07a38"/><circle cx="77.1" cy="379.7" r="0.9" fill="#e07a38"/><circle cx="79.5" cy="379.7" r="0.9" fill="#e07a38"/><circle cx="81.8" cy="379.7" r="0.9" fill="#e07a38"/><circle cx="84.2" cy="379.7" r="0.9" fill="#e07a38"/><circle cx="86.5" cy="379.7" r="0.9" fill="#e07a38"/><circle cx="88.8" cy="379.7" r="0.9" fill="#e07a38"/><circle cx="91.2" cy="379.7" r="0.9" fill="#e07a38"/><circle cx="93.5" cy="379.7" r="0.9" fill="#e07a38"/><circle cx="95.9" cy="379.7" r="0.9" fill="#e07a38"/><circle cx="98.2" cy="379.7" r="0.9" fill="#e07a38"/><circle cx="100.5" cy="379.7" r="0.9" fill="#e07a38"/><circle cx="102.9" cy="379.7" r="0.9" fill="#e07a38"/><circle cx="105.2" cy="379.7" r="0.9" fill="#e07a38"/><circle cx="107.6" cy="379.7" r="0.9" fill="#e07a38"/><circle cx="109.9" cy="379.7" r="0.9" fill="#e07a38"/><circle cx="112.2" cy="379.7" r="0.9" fill="#e07a38"/><circle cx="114.6" cy="379.7" r="0.9" fill="#e07a38"/><circle cx="116.9" cy="379.7" r="0.9" fill="#e07a38"/><circle cx="119.3" cy="379.7" r="0.9" fill="#e07a38"/><circle cx="121.6" cy="379.7" r="0.9" fill="#e07a38"/><circle cx="123.9" cy="379.7" r="0.9" fill="#e07a38"/><circle cx="126.3" cy="379.7" r="0.9" fill="#e07a38"/><circle cx="128.6" cy="379.7" r="0.9" fill="#e07a38"/><circle cx="131.0" cy="379.7" r="0.9" fill="#e07a38"/><circle cx="133.3" cy="379.7" r="0.9" fill="#e07a38"/><circle cx="135.6" cy="379.7" r="0.9" fill="#e07a38"/><circle cx="138.0" cy="379.7" r="0.9" fill="#e07a38"/><circle cx="140.3" cy="379.7" r="0.9" fill="#e07a38"/><circle cx="142.7" cy="379.7" r="0.9" fill="#e07a38"/><circle cx="145.0" cy="379.7" r="0.9" fill="#e07a38"/><circle cx="147.3" cy="379.7" r="0.9" fill="#e07a38"/><circle cx="149.7" cy="379.7" r="0.9" fill="#e07a38"/><circle cx="152.0" cy="379.7" r="0.9" fill="#e07a38"/><circle cx="154.4" cy="379.7" r="0.9" fill="#e07a38"/><circle cx="156.7" cy="379.7" r="0.9" fill="#e07a38"/><circle cx="159.0" cy="379.7" r="0.9" fill="#e07a38"/><circle cx="161.4" cy="379.7" r="0.9" fill="#e07a38"/><circle cx="163.7" cy="379.7" r="0.9" fill="#e07a38"/><circle cx="166.1" cy="379.7" r="0.9" fill="#e07a38"/><circle cx="168.4" cy="379.7" r="0.9" fill="#e07a38"/><circle cx="170.7" cy="379.7" r="0.9" fill="#e07a38"/><circle cx="173.1" cy="379.7" r="0.9" fill="#e07a38"/><circle cx="175.4" cy="379.7" r="0.9" fill="#e07a38"/><circle cx="177.8" cy="379.7" r="0.9" fill="#e07a38"/><circle cx="180.1" cy="379.7" r="0.9" fill="#e07a38"/><circle cx="182.4" cy="379.7" r="0.9" fill="#e07a38"/><circle cx="184.8" cy="379.7" r="0.9" fill="#e07a38"/><circle cx="187.1" cy="379.7" r="0.9" fill="#e07a38"/><circle cx="189.5" cy="379.7" r="0.9" fill="#e07a38"/><circle cx="191.8" cy="379.7" r="0.9" fill="#e07a38"/><circle cx="194.1" cy="379.7" r="0.9" fill="#e07a38"/><circle cx="196.5" cy="379.7" r="0.9" fill="#e07a38"/><circle cx="198.8" cy="379.7" r="0.9" fill="#e07a38"/><circle cx="201.2" cy="379.7" r="0.9" fill="#e07a38"/><circle cx="203.5" cy="379.7" r="0.9" fill="#e07a38"/><circle cx="205.8" cy="379.7" r="0.9" fill="#e07a38"/><circle cx="208.2" cy="379.7" r="0.9" fill="#e07a38"/><circle cx="210.5" cy="379.7" r="0.9" fill="#e07a38"/><circle cx="212.9" cy="379.7" r="0.9" fill="#e07a38"/><circle cx="215.2" cy="379.7" r="0.9" fill="#e07a38"/><circle cx="217.5" cy="379.7" r="0.9" fill="#e07a38"/><circle cx="219.9" cy="379.7" r="0.9" fill="#e07a38"/><circle cx="222.2" cy="379.7" r="0.9" fill="#e07a38"/><circle cx="224.6" cy="379.7" r="0.9" fill="#e07a38"/><circle cx="226.9" cy="379.7" r="0.9" fill="#e07a38"/><circle cx="229.2" cy="379.7" r="0.9" fill="#e07a38"/><circle cx="231.6" cy="379.7" r="0.9" fill="#e07a38"/><circle cx="233.9" cy="379.7" r="0.9" fill="#e07a38"/><circle cx="236.3" cy="379.7" r="0.9" fill="#e07a38"/><circle cx="238.6" cy="379.7" r="0.9" fill="#e07a38"/><circle cx="240.9" cy="379.7" r="0.9" fill="#e07a38"/><circle cx="243.3" cy="379.7" r="0.9" fill="#e07a38"/><circle cx="245.6" cy="379.7" r="0.9" fill="#e07a38"/><circle cx="248.0" cy="379.7" r="0.9" fill="#e07a38"/><circle cx="250.3" cy="379.7" r="0.9" fill="#e07a38"/><circle cx="252.6" cy="379.7" r="0.9" fill="#e07a38"/><circle cx="255.0" cy="379.7" r="0.9" fill="#e07a38"/><circle cx="257.3" cy="379.7" r="0.9" fill="#e07a38"/><circle cx="259.7" cy="379.7" r="0.9" fill="#e07a38"/><circle cx="262.0" cy="379.7" r="0.9" fill="#e07a38"/><circle cx="264.3" cy="379.7" r="0.9" fill="#e07a38"/><circle cx="266.7" cy="379.7" r="0.9" fill="#e07a38"/><circle cx="269.0" cy="379.7" r="0.9" fill="#e07a38"/><circle cx="271.4" cy="379.7" r="0.9" fill="#e07a38"/><circle cx="273.7" cy="379.7" r="0.9" fill="#e07a38"/><circle cx="276.0" cy="379.7" r="0.9" fill="#e07a38"/><circle cx="278.4" cy="379.7" r="0.9" fill="#e07a38"/><circle cx="280.7" cy="379.7" r="0.9" fill="#e07a38"/><circle cx="283.1" cy="379.7" r="0.9" fill="#e07a38"/><circle cx="285.4" cy="379.7" r="0.9" fill="#e07a38"/><circle cx="287.7" cy="379.7" r="0.9" fill="#e07a38"/><circle cx="290.1" cy="379.7" r="0.9" fill="#e07a38"/><circle cx="292.4" cy="379.7" r="0.9" fill="#e07a38"/><circle cx="294.8" cy="379.7" r="0.9" fill="#e07a38"/><circle cx="297.1" cy="379.7" r="0.9" fill="#e07a38"/><circle cx="299.4" cy="379.7" r="0.9" fill="#e07a38"/><circle cx="301.8" cy="379.7" r="0.9" fill="#e07a38"/><circle cx="304.1" cy="379.7" r="0.9" fill="#e07a38"/><circle cx="306.5" cy="379.7" r="0.9" fill="#e07a38"/><circle cx="308.8" cy="379.7" r="0.9" fill="#e07a38"/><circle cx="311.1" cy="379.7" r="0.9" fill="#e07a38"/><circle cx="313.5" cy="379.7" r="0.9" fill="#e07a38"/><circle cx="315.8" cy="379.7" r="0.9" fill="#e07a38"/><circle cx="318.2" cy="379.7" r="0.9" fill="#e07a38"/><circle cx="320.5" cy="379.7" r="0.9" fill="#e07a38"/><circle cx="322.8" cy="379.7" r="0.9" fill="#e07a38"/><circle cx="325.2" cy="379.7" r="0.9" fill="#e07a38"/><circle cx="327.5" cy="379.7" r="0.9" fill="#e07a38"/><circle cx="329.9" cy="379.7" r="0.9" fill="#e07a38"/><circle cx="332.2" cy="379.7" r="0.9" fill="#e07a38"/><circle cx="334.5" cy="379.7" r="0.9" fill="#e07a38"/><circle cx="336.9" cy="379.7" r="0.9" fill="#e07a38"/><circle cx="339.2" cy="379.7" r="0.9" fill="#e07a38"/><circle cx="341.6" cy="379.7" r="0.9" fill="#e07a38"/><circle cx="343.9" cy="379.7" r="0.9" fill="#e07a38"/><circle cx="346.2" cy="379.7" r="0.9" fill="#e07a38"/><circle cx="348.6" cy="379.7" r="0.9" fill="#e07a38"/><circle cx="350.9" cy="379.7" r="0.9" fill="#e07a38"/><circle cx="353.3" cy="379.7" r="0.9" fill="#e07a38"/><circle cx="355.6" cy="379.7" r="0.9" fill="#e07a38"/><circle cx="357.9" cy="379.7" r="0.9" fill="#e07a38"/><circle cx="360.3" cy="379.7" r="0.9" fill="#e07a38"/><circle cx="362.6" cy="379.7" r="0.9" fill="#e07a38"/><circle cx="365.0" cy="379.7" r="0.9" fill="#e07a38"/><circle cx="367.3" cy="379.7" r="0.9" fill="#e07a38"/><circle cx="369.6" cy="379.7" r="0.9" fill="#e07a38"/><circle cx="372.0" cy="379.7" r="0.9" fill="#e07a38"/><circle cx="374.3" cy="379.7" r="0.9" fill="#e07a38"/><circle cx="376.7" cy="379.7" r="0.9" fill="#e07a38"/><circle cx="379.0" cy="379.7" r="0.9" fill="#e07a38"/><circle cx="381.3" cy="379.7" r="0.9" fill="#e07a38"/><circle cx="383.7" cy="379.7" r="0.9" fill="#e07a38"/><circle cx="386.0" cy="379.7" r="0.9" fill="#e07a38"/><circle cx="388.4" cy="379.7" r="0.9" fill="#e07a38"/><circle cx="390.7" cy="379.7" r="0.9" fill="#e07a38"/><circle cx="393.0" cy="379.7" r="0.9" fill="#e07a38"/><circle cx="395.4" cy="379.7" r="0.9" fill="#e07a38"/><circle cx="397.7" cy="379.7" r="0.9" fill="#e07a38"/><circle cx="400.1" cy="379.7" r="0.9" fill="#e07a38"/><circle cx="402.4" cy="379.7" r="0.9" fill="#e07a38"/><circle cx="404.7" cy="379.7" r="0.9" fill="#e07a38"/><circle cx="407.1" cy="379.7" r="0.9" fill="#e07a38"/><circle cx="409.4" cy="379.7" r="0.9" fill="#e07a38"/><circle cx="411.8" cy="379.7" r="0.9" fill="#e07a38"/><circle cx="414.1" cy="379.7" r="0.9" fill="#e07a38"/><circle cx="416.4" cy="379.7" r="0.9" fill="#e07a38"/><circle cx="418.8" cy="379.7" r="0.9" fill="#e07a38"/><circle cx="421.1" cy="379.7" r="0.9" fill="#e07a38"/><circle cx="423.5" cy="379.7" r="0.9" fill="#e07a38"/><circle cx="425.8" cy="379.7" r="0.9" fill="#e07a38"/><circle cx="428.1" cy="379.7" r="0.9" fill="#e07a38"/><circle cx="430.5" cy="379.7" r="0.9" fill="#e07a38"/><circle cx="432.8" cy="379.7" r="0.9" fill="#e07a38"/><circle cx="435.2" cy="379.7" r="0.9" fill="#e07a38"/><circle cx="437.5" cy="379.7" r="0.9" fill="#e07a38"/><circle cx="439.8" cy="379.7" r="0.9" fill="#e07a38"/><circle cx="442.2" cy="379.7" r="0.9" fill="#e07a38"/><circle cx="444.5" cy="379.7" r="0.9" fill="#e07a38"/><circle cx="446.9" cy="379.7" r="0.9" fill="#e07a38"/><circle cx="449.2" cy="379.7" r="0.9" fill="#e07a38"/><circle cx="451.5" cy="379.7" r="0.9" fill="#e07a38"/><circle cx="453.9" cy="379.7" r="0.9" fill="#e07a38"/><circle cx="456.2" cy="379.7" r="0.9" fill="#e07a38"/><circle cx="458.6" cy="379.7" r="0.9" fill="#e07a38"/><circle cx="460.9" cy="379.7" r="0.9" fill="#e07a38"/><circle cx="463.2" cy="379.7" r="0.9" fill="#e07a38"/><circle cx="465.6" cy="379.7" r="0.9" fill="#e07a38"/><circle cx="467.9" cy="379.7" r="0.9" fill="#e07a38"/><circle cx="470.3" cy="379.7" r="0.9" fill="#e07a38"/><circle cx="472.6" cy="379.7" r="0.9" fill="#e07a38"/><circle cx="474.9" cy="379.7" r="0.9" fill="#e07a38"/><circle cx="477.3" cy="379.7" r="0.9" fill="#e07a38"/><circle cx="479.6" cy="379.7" r="0.9" fill="#e07a38"/><circle cx="482.0" cy="379.7" r="0.9" fill="#e07a38"/><circle cx="484.3" cy="379.7" r="0.9" fill="#e07a38"/><circle cx="486.6" cy="379.7" r="0.9" fill="#e07a38"/><circle cx="489.0" cy="379.7" r="0.9" fill="#e07a38"/><circle cx="491.3" cy="379.7" r="0.9" fill="#e07a38"/><circle cx="493.7" cy="379.7" r="0.9" fill="#e07a38"/><circle cx="496.0" cy="379.7" r="0.9" fill="#e07a38"/><circle cx="498.3" cy="379.7" r="0.9" fill="#e07a38"/><circle cx="500.7" cy="379.7" r="0.9" fill="#e07a38"/><circle cx="503.0" cy="379.7" r="0.9" fill="#e07a38"/><circle cx="505.4" cy="379.7" r="0.9" fill="#e07a38"/><circle cx="507.7" cy="379.7" r="0.9" fill="#e07a38"/><circle cx="510.0" cy="379.7" r="0.9" fill="#e07a38"/><circle cx="512.4" cy="379.7" r="0.9" fill="#e07a38"/><circle cx="514.7" cy="379.7" r="0.9" fill="#e07a38"/><circle cx="517.1" cy="379.7" r="0.9" fill="#e07a38"/><circle cx="519.4" cy="379.7" r="0.9" fill="#e07a38"/><circle cx="521.7" cy="379.7" r="0.9" fill="#e07a38"/><circle cx="524.1" cy="379.7" r="0.9" fill="#e07a38"/><circle cx="526.4" cy="379.7" r="0.9" fill="#e07a38"/><circle cx="528.8" cy="379.7" r="0.9" fill="#e07a38"/><circle cx="531.1" cy="379.7" r="0.9" fill="#e07a38"/><circle cx="533.4" cy="379.7" r="0.9" fill="#e07a38"/><circle cx="535.8" cy="379.7" r="0.9" fill="#e07a38"/><circle cx="538.1" cy="379.7" r="0.9" fill="#e07a38"/><circle cx="540.5" cy="379.7" r="0.9" fill="#e07a38"/><circle cx="542.8" cy="379.7" r="0.9" fill="#e07a38"/><circle cx="545.1" cy="379.7" r="0.9" fill="#e07a38"/><circle cx="547.5" cy="379.7" r="0.9" fill="#e07a38"/><circle cx="549.8" cy="379.7" r="0.9" fill="#e07a38"/><circle cx="552.2" cy="379.7" r="0.9" fill="#e07a38"/><circle cx="554.5" cy="379.7" r="0.9" fill="#e07a38"/><circle cx="556.8" cy="379.7" r="0.9" fill="#e07a38"/><circle cx="559.2" cy="379.7" r="0.9" fill="#e07a38"/><circle cx="561.5" cy="379.7" r="0.9" fill="#e07a38"/><circle cx="563.9" cy="379.7" r="0.9" fill="#e07a38"/><circle cx="566.2" cy="379.7" r="0.9" fill="#e07a38"/><circle cx="568.5" cy="379.7" r="0.9" fill="#e07a38"/><circle cx="570.9" cy="379.7" r="0.9" fill="#e07a38"/><circle cx="573.2" cy="379.7" r="0.9" fill="#e07a38"/><circle cx="575.6" cy="379.7" r="0.9" fill="#e07a38"/><circle cx="577.9" cy="379.7" r="0.9" fill="#e07a38"/><circle cx="580.2" cy="379.7" r="0.9" fill="#e07a38"/><circle cx="582.6" cy="379.7" r="0.9" fill="#e07a38"/><circle cx="584.9" cy="379.7" r="0.9" fill="#e07a38"/><circle cx="587.3" cy="379.7" r="0.9" fill="#e07a38"/><circle cx="589.6" cy="379.7" r="0.9" fill="#e07a38"/><circle cx="591.9" cy="379.7" r="0.9" fill="#e07a38"/><circle cx="594.3" cy="379.7" r="0.9" fill="#e07a38"/><circle cx="596.6" cy="379.7" r="0.9" fill="#e07a38"/><circle cx="599.0" cy="379.7" r="0.9" fill="#e07a38"/><circle cx="601.3" cy="379.7" r="0.9" fill="#e07a38"/><circle cx="603.6" cy="379.7" r="0.9" fill="#e07a38"/><circle cx="606.0" cy="379.7" r="0.9" fill="#e07a38"/><circle cx="608.3" cy="379.7" r="0.9" fill="#e07a38"/><circle cx="610.7" cy="379.7" r="0.9" fill="#e07a38"/><polyline fill="none" stroke="#f08a40" stroke-width="0.8" points="514.7,380 515.4,348.2 516.1,380"/><circle cx="515.4" cy="348.2" r="1" fill="#f08a40"/><path d="M28.10,380 L28.75,348.20 L29.25,348.20 L29.90,380" fill="#c4c4f8" stroke="#6262e6" stroke-width="0.5"/><line x1="29.00" y1="362.0" x2="29.00" y2="379" stroke="#4a50c0" stroke-width="0.6" opacity="0.45"/><path d="M64.35,380 L65.00,348.20 L65.50,348.20 L66.15,380" fill="#c4c4f8" stroke="#6262e6" stroke-width="0.5"/><line x1="65.25" y1="362.0" x2="65.25" y2="379" stroke="#4a50c0" stroke-width="0.6" opacity="0.45"/><path d="M98.10,380 L98.75,348.20 L99.25,348.20 L99.90,380" fill="#c4c4f8" stroke="#6262e6" stroke-width="0.5"/><line x1="99.00" y1="362.0" x2="99.00" y2="379" stroke="#4a50c0" stroke-width="0.6" opacity="0.45"/><path d="M156.35,380 L157.00,348.20 L157.50,348.20 L158.15,380" fill="#c4c4f8" stroke="#6262e6" stroke-width="0.5"/><line x1="157.25" y1="362.0" x2="157.25" y2="379" stroke="#4a50c0" stroke-width="0.6" opacity="0.45"/><path d="M199.35,380 L200.00,348.20 L200.50,348.20 L201.15,380" fill="#c4c4f8" stroke="#6262e6" stroke-width="0.5"/><line x1="200.25" y1="362.0" x2="200.25" y2="379" stroke="#4a50c0" stroke-width="0.6" opacity="0.45"/><path d="M231.35,380 L232.00,348.20 L232.50,348.20 L233.15,380" fill="#c4c4f8" stroke="#6262e6" stroke-width="0.5"/><line x1="232.25" y1="362.0" x2="232.25" y2="379" stroke="#4a50c0" stroke-width="0.6" opacity="0.45"/><path d="M239.10,380 L239.75,316.40 L240.25,316.40 L240.90,380" fill="#c4c4f8" stroke="#6262e6" stroke-width="0.5"/><line x1="240.00" y1="362.0" x2="240.00" y2="379" stroke="#4a50c0" stroke-width="0.6" opacity="0.45"/><path d="M248.10,380 L248.75,348.20 L249.25,348.20 L249.90,380" fill="#c4c4f8" stroke="#6262e6" stroke-width="0.5"/><line x1="249.00" y1="362.0" x2="249.00" y2="379" stroke="#4a50c0" stroke-width="0.6" opacity="0.45"/><path d="M329.35,380 L330.00,348.20 L330.50,348.20 L331.15,380" fill="#c4c4f8" stroke="#6262e6" stroke-width="0.5"/><line x1="330.25" y1="362.0" x2="330.25" y2="379" stroke="#4a50c0" stroke-width="0.6" opacity="0.45"/><path d="M393.85,380 L394.50,348.20 L395.00,348.20 L395.65,380" fill="#c4c4f8" stroke="#6262e6" stroke-width="0.5"/><line x1="394.75" y1="362.0" x2="394.75" y2="379" stroke="#4a50c0" stroke-width="0.6" opacity="0.45"/><path d="M396.85,380 L397.50,348.20 L398.00,348.20 L398.65,380" fill="#c4c4f8" stroke="#6262e6" stroke-width="0.5"/><line x1="397.75" y1="362.0" x2="397.75" y2="379" stroke="#4a50c0" stroke-width="0.6" opacity="0.45"/><path d="M409.60,380 L410.25,348.20 L410.75,348.20 L411.40,380" fill="#c4c4f8" stroke="#6262e6" stroke-width="0.5"/><line x1="410.50" y1="362.0" x2="410.50" y2="379" stroke="#4a50c0" stroke-width="0.6" opacity="0.45"/><path d="M413.85,380 L414.50,348.20 L415.00,348.20 L415.65,380" fill="#c4c4f8" stroke="#6262e6" stroke-width="0.5"/><line x1="414.75" y1="362.0" x2="414.75" y2="379" stroke="#4a50c0" stroke-width="0.6" opacity="0.45"/><path d="M438.85,380 L439.50,348.20 L440.00,348.20 L440.65,380" fill="#c4c4f8" stroke="#6262e6" stroke-width="0.5"/><line x1="439.75" y1="362.0" x2="439.75" y2="379" stroke="#4a50c0" stroke-width="0.6" opacity="0.45"/><path d="M495.85,380 L496.50,348.20 L497.00,348.20 L497.65,380" fill="#c4c4f8" stroke="#6262e6" stroke-width="0.5"/><line x1="496.75" y1="362.0" x2="496.75" y2="379" stroke="#4a50c0" stroke-width="0.6" opacity="0.45"/><path d="M505.60,380 L506.25,316.40 L506.75,316.40 L507.40,380" fill="#c4c4f8" stroke="#6262e6" stroke-width="0.5"/><line x1="506.50" y1="362.0" x2="506.50" y2="379" stroke="#4a50c0" stroke-width="0.6" opacity="0.45"/><path d="M508.70,380 L509.35,348.20 L509.85,348.20 L510.50,380" fill="#c4c4f8" stroke="#6262e6" stroke-width="0.5"/><line x1="509.60" y1="362.0" x2="509.60" y2="379" stroke="#4a50c0" stroke-width="0.6" opacity="0.45"/><path d="M512.00,380 L512.65,348.20 L513.15,348.20 L513.80,380" fill="#c4c4f8" stroke="#6262e6" stroke-width="0.5"/><line x1="512.90" y1="362.0" x2="512.90" y2="379" stroke="#4a50c0" stroke-width="0.6" opacity="0.45"/><path d="M526.00,380 L526.65,348.20 L527.15,348.20 L527.80,380" fill="#c4c4f8" stroke="#6262e6" stroke-width="0.5"/><line x1="526.90" y1="362.0" x2="526.90" y2="379" stroke="#4a50c0" stroke-width="0.6" opacity="0.45"/><path d="M590.00,380 L590.65,348.20 L591.15,348.20 L591.80,380" fill="#c4c4f8" stroke="#6262e6" stroke-width="0.5"/><line x1="590.90" y1="362.0" x2="590.90" y2="379" stroke="#4a50c0" stroke-width="0.6" opacity="0.45"/><polyline fill="none" stroke="#c940c4" stroke-width="0.8" points="28.0,295.2 28.8,300.9 29.6,295.2 30.4,294.4 31.2,294.9 32.1,294.6 32.9,294.8 33.7,294.7 34.5,294.0 35.3,295.0 36.1,295.1 36.9,294.0 37.7,294.1 38.6,294.5 39.4,293.7 40.2,297.2 41.0,294.8 41.8,294.3 42.6,293.7 43.4,294.4 44.2,293.9 45.1,294.1 45.9,294.7 46.7,293.8 47.5,293.9 48.3,294.5 49.1,294.2 49.9,298.3 50.7,294.9 51.5,294.0 52.4,295.0 53.2,294.8 54.0,294.3 54.8,294.7 55.6,293.5 56.4,295.0 57.2,295.0 58.0,293.5 58.9,293.9 59.7,294.9 60.5,295.0 61.3,294.5 62.1,295.9 62.9,294.4 63.7,294.4 64.5,299.2 65.4,293.6 66.2,294.2 67.0,294.5 67.8,294.0 68.6,293.9 69.4,293.7 70.2,294.1 71.0,294.7 71.8,295.1 72.7,293.9 73.5,294.1 74.3,294.5 75.1,294.1 75.9,294.0 76.7,294.9 77.5,293.9 78.3,294.4 79.2,295.2 80.0,294.9 80.8,293.6 81.6,295.0 82.4,294.3 83.2,294.3 84.0,293.8 84.8,294.5 85.6,294.9 86.5,294.5 87.3,295.0 88.1,294.6 88.9,296.6 89.7,296.5 90.5,294.6 91.3,294.8 92.1,293.6 93.0,294.8 93.8,294.5 94.6,295.0 95.4,293.8 96.2,294.4 97.0,294.8 97.8,294.6 98.6,293.8 99.5,294.4 100.3,294.3 101.1,299.3 101.9,294.8 102.7,294.8 103.5,294.9 104.3,296.8 105.1,294.7 105.9,294.5 106.8,294.1 107.6,293.6 108.4,295.1 109.2,293.6 110.0,295.0 110.8,294.1 111.6,295.6 112.4,294.8 113.3,296.8 114.1,294.6 114.9,293.6 115.7,294.9 116.5,294.2 117.3,294.1 118.1,293.8 118.9,294.9 119.8,294.3 120.6,294.5 121.4,294.3 122.2,294.8 123.0,299.8 123.8,295.0 124.6,294.4 125.4,293.7 126.2,296.4 127.1,294.1 127.9,294.6 128.7,293.5 129.5,296.1 130.3,296.1 131.1,294.6 131.9,294.3 132.7,293.7 133.6,296.2 134.4,293.7 135.2,294.4 136.0,293.9 136.8,294.5 137.6,294.3 138.4,294.7 139.2,294.5 140.1,294.7 140.9,293.5 141.7,293.8 142.5,294.7 143.3,294.2 144.1,293.9 144.9,295.7 145.7,295.1 146.5,295.2 147.4,293.6 148.2,294.1 149.0,293.6 149.8,294.1 150.6,294.0 151.4,294.0 152.2,294.1 153.0,293.9 153.9,297.2 154.7,293.6 155.5,294.6 156.3,293.9 157.1,294.8 157.9,294.5 158.7,294.5 159.5,293.6 160.3,297.2 161.2,296.3 162.0,294.4 162.8,296.2 163.6,293.5 164.4,294.5 165.2,296.9 166.0,295.2 166.8,297.0 167.7,295.1 168.5,295.0 169.3,296.8 170.1,294.9 170.9,296.0 171.7,294.0 172.5,296.0 173.3,293.6 174.2,293.5 175.0,295.2 175.8,295.8 176.6,296.0 177.4,293.7 178.2,295.1 179.0,294.2 179.8,294.0 180.6,299.2 181.5,294.1 182.3,294.6 183.1,293.6 183.9,294.2 184.7,295.1 185.5,294.0 186.3,294.6 187.1,293.5 188.0,294.2 188.8,294.5 189.6,294.6 190.4,294.2 191.2,293.8 192.0,295.2 192.8,294.5 193.6,293.8 194.5,295.1 195.3,293.8 196.1,294.2 196.9,293.7 197.7,294.0 198.5,294.6 199.3,295.9 200.1,293.9 200.9,294.8 201.8,294.0 202.6,294.9 203.4,293.9 204.2,294.4 205.0,295.9 205.8,294.2 206.6,293.7 207.4,294.4 208.3,294.9 209.1,294.9 209.9,294.6 210.7,294.5 211.5,295.0 212.3,296.6 213.1,295.9 213.9,294.2 214.8,294.3 215.6,295.5 216.4,294.4 217.2,294.8 218.0,294.5 218.8,293.9 219.6,293.5 220.4,295.2 221.2,294.9 222.1,296.3 222.9,294.4 223.7,293.6 224.5,296.6 225.3,296.8 226.1,294.1 226.9,294.1 227.7,294.4 228.6,293.5 229.4,294.8 230.2,296.6 231.0,293.6 231.8,295.1 232.6,294.0 233.4,293.5 234.2,295.9 235.1,294.0 235.9,294.2 236.7,295.0 237.5,294.8 238.3,299.6 239.1,295.0 239.9,295.2 240.7,294.9 241.5,296.9 242.4,293.7 243.2,295.0 244.0,295.1 244.8,293.8 245.6,294.4 246.4,293.8 247.2,294.1 248.0,299.8 248.9,294.3 249.7,299.4 250.5,295.0 251.3,293.8 252.1,294.9 252.9,294.7 253.7,295.0 254.5,295.1 255.3,294.1 256.2,294.4 257.0,294.8 257.8,294.6 258.6,293.5 259.4,295.1 260.2,293.7 261.0,296.7 261.8,295.2 262.7,294.6 263.5,298.4 264.3,294.9 265.1,293.6 265.9,294.2 266.7,298.5 267.5,294.9 268.3,296.2 269.2,294.7 270.0,294.2 270.8,293.8 271.6,294.9 272.4,296.5 273.2,295.1 274.0,294.6 274.8,293.7 275.6,295.2 276.5,294.4 277.3,294.8 278.1,293.8 278.9,294.9 279.7,294.2 280.5,296.5 281.3,295.0 282.1,293.8 283.0,294.7 283.8,294.6 284.6,295.1 285.4,293.6 286.2,294.3 287.0,294.3 287.8,296.9 288.6,295.0 289.5,293.8 290.3,296.0 291.1,295.2 291.9,294.2 292.7,294.0 293.5,296.0 294.3,296.4 295.1,294.7 295.9,299.6 296.8,293.7 297.6,298.6 298.4,293.8 299.2,294.5 300.0,293.8 300.8,294.5 301.6,293.9 302.4,294.8 303.3,294.5 304.1,293.8 304.9,293.8 305.7,295.1 306.5,293.6 307.3,294.8 308.1,294.1 308.9,294.3 309.8,296.4 310.6,295.6 311.4,293.6 312.2,293.8 313.0,293.7 313.8,296.8 314.6,294.7 315.4,293.6 316.2,294.8 317.1,294.5 317.9,294.7 318.7,294.1 319.5,298.2 320.3,294.8 321.1,294.3 321.9,299.6 322.7,294.5 323.6,294.8 324.4,295.8 325.2,294.2 326.0,294.9 326.8,294.4 327.6,294.2 328.4,294.7 329.2,294.8 330.0,294.6 330.9,295.2 331.7,293.7 332.5,294.3 333.3,294.7 334.1,294.7 334.9,294.9 335.7,296.5 336.5,296.5 337.4,295.0 338.2,293.6 339.0,295.0 339.8,294.6 340.6,294.1 341.4,293.8 342.2,293.9 343.0,293.9 343.9,293.9 344.7,293.6 345.5,299.9 346.3,294.2 347.1,293.5 347.9,294.5 348.7,293.7 349.5,294.6 350.3,294.4 351.2,294.7 352.0,294.3 352.8,294.7 353.6,293.7 354.4,294.4 355.2,294.7 356.0,298.9 356.8,296.7 357.7,293.8 358.5,294.9 359.3,293.6 360.1,296.3 360.9,293.6 361.7,294.3 362.5,294.3 363.3,294.0 364.2,294.6 365.0,294.6 365.8,294.0 366.6,295.1 367.4,294.5 368.2,294.2 369.0,293.5 369.8,294.5 370.6,293.5 371.5,294.3 372.3,294.9 373.1,293.5 373.9,294.3 374.7,296.1 375.5,293.5 376.3,294.5 377.1,294.7 378.0,294.3 378.8,294.9 379.6,294.2 380.4,293.5 381.2,295.1 382.0,293.9 382.8,294.0 383.6,295.8 384.5,294.1 385.3,294.4 386.1,294.8 386.9,294.3 387.7,294.2 388.5,295.0 389.3,293.9 390.1,297.0 390.9,293.8 391.8,293.8 392.6,295.9 393.4,294.0 394.2,294.9 395.0,295.0 395.8,294.2 396.6,294.4 397.4,295.1 398.3,294.2 399.1,294.5 399.9,294.8 400.7,295.8 401.5,293.7 402.3,294.7 403.1,293.6 403.9,293.6 404.7,294.5 405.6,294.8 406.4,293.7 407.2,293.8 408.0,294.9 408.8,294.9 409.6,294.7 410.4,295.0 411.2,294.6 412.1,295.1 412.9,299.3 413.7,294.9 414.5,294.8 415.3,296.7 416.1,294.0 416.9,295.8 417.7,298.4 418.6,294.9 419.4,294.0 420.2,293.6 421.0,293.6 421.8,294.8 422.6,295.0 423.4,294.8 424.2,294.2 425.0,294.8 425.9,294.9 426.7,295.0 427.5,294.3 428.3,293.9 429.1,294.1 429.9,294.7 430.7,295.1 431.5,293.7 432.4,294.1 433.2,296.6 434.0,294.7 434.8,296.9 435.6,299.4 436.4,293.6 437.2,293.7 438.0,295.0 438.9,295.2 439.7,294.1 440.5,294.5 441.3,294.0 442.1,293.7 442.9,294.1 443.7,295.0 444.5,293.9 445.3,295.2 446.2,296.9 447.0,294.6 447.8,296.1 448.6,293.8 449.4,294.0 450.2,294.5 451.0,294.6 451.8,295.9 452.7,295.1 453.5,294.2 454.3,297.1 455.1,294.9 455.9,293.9 456.7,296.6 457.5,293.8 458.3,295.1 459.2,294.5 460.0,294.0 460.8,293.8 461.6,294.4 462.4,296.5 463.2,293.6 464.0,299.8 464.8,293.8 465.6,294.3 466.5,294.1 467.3,294.8 468.1,296.5 468.9,294.7 469.7,298.7 470.5,294.8 471.3,294.4 472.1,294.6 473.0,293.7 473.8,299.3 474.6,294.3 475.4,294.9 476.2,294.2 477.0,293.9 477.8,295.0 478.6,294.6 479.5,295.1 480.3,294.9 481.1,294.4 481.9,296.4 482.7,294.9 483.5,295.5 484.3,295.1 485.1,293.5 485.9,295.0 486.8,294.5 487.6,294.3 488.4,296.1 489.2,293.6 490.0,294.8 490.8,295.0 491.6,295.8 492.4,294.9 493.3,293.7 494.1,298.8 494.9,295.8 495.7,295.7 496.5,296.0 497.3,306.0 498.1,299.0 498.9,299.8 499.7,294.7 500.6,294.1 501.4,296.5 502.2,293.9 503.0,298.3 503.8,299.2 504.6,295.5 505.4,296.4 506.2,311.8 507.1,294.7 507.9,297.3 508.7,294.2 509.5,300.0 510.3,300.0 511.1,298.9 511.9,297.6 512.7,299.9 513.6,295.6 514.4,293.8 515.2,305.2 516.0,296.1 516.8,297.1 517.6,294.4 518.4,297.2 519.2,295.3 520.0,295.3 520.9,295.1 521.7,374.2 522.5,374.2 523.3,374.2 524.1,374.2 524.9,300.2 525.7,293.9 526.5,293.8 527.4,294.2 528.2,294.0 529.0,293.7 529.8,294.2 530.6,294.4 531.4,294.2 532.2,293.6 533.0,293.6 533.9,294.3 534.7,293.6 535.5,293.8 536.3,294.7 537.1,294.0 537.9,293.5 538.7,294.5 539.5,294.0 540.3,294.6 541.2,294.0 542.0,294.2 542.8,294.0 543.6,293.5 544.4,294.5 545.2,293.7 546.0,293.6 546.8,294.1 547.7,294.2 548.5,294.6 549.3,293.5 550.1,294.5 550.9,294.0 551.7,294.7 552.5,294.7 553.3,294.7 554.2,294.4 555.0,294.4 555.8,293.5 556.6,294.0 557.4,293.7 558.2,294.2 559.0,293.6 559.8,294.3 560.6,294.0 561.5,294.0 562.3,294.3 563.1,294.1 563.9,294.4 564.7,294.7 565.5,294.1 566.3,294.5 567.1,294.3 568.0,293.5 568.8,294.0 569.6,294.0 570.4,293.7 571.2,294.6 572.0,294.4 572.8,294.5 573.6,294.4 574.4,293.9 575.3,294.5 576.1,293.9 576.9,293.6 577.7,294.5 578.5,293.9 579.3,294.3 580.1,294.2 580.9,294.6 581.8,293.9 582.6,293.9 583.4,294.7 584.2,293.4 585.0,293.8 585.8,294.5 586.6,294.6 587.4,294.0 588.3,293.9 589.1,293.7 589.9,293.7 590.7,293.7 591.5,294.4 592.3,294.5 593.1,293.9 593.9,293.4 594.7,294.6 595.6,294.6 596.4,294.5 597.2,294.5 598.0,293.5 598.8,293.7 599.6,294.1 600.4,293.7 601.2,293.5 602.1,294.6 602.9,293.6 603.7,294.2 604.5,293.9 605.3,294.4 606.1,294.4 606.9,294.3 607.7,294.0 608.6,293.6 609.4,293.6 610.2,294.1 611.0,293.8 611.8,294.0"/><circle cx="28.0" cy="295.2" r="0.85" fill="#d870d4" stroke="#c33cbe" stroke-width="0.55"/><circle cx="28.8" cy="300.9" r="0.85" fill="#d870d4" stroke="#c33cbe" stroke-width="0.55"/><circle cx="29.6" cy="295.2" r="0.85" fill="#d870d4" stroke="#c33cbe" stroke-width="0.55"/><circle cx="30.4" cy="294.4" r="0.85" fill="#d870d4" stroke="#c33cbe" stroke-width="0.55"/><circle cx="31.2" cy="294.9" r="0.85" fill="#d870d4" stroke="#c33cbe" stroke-width="0.55"/><circle cx="32.1" cy="294.6" r="0.85" fill="#d870d4" stroke="#c33cbe" stroke-width="0.55"/><circle cx="32.9" cy="294.8" r="0.85" fill="#d870d4" stroke="#c33cbe" stroke-width="0.55"/><circle cx="33.7" cy="294.7" r="0.85" fill="#d870d4" stroke="#c33cbe" stroke-width="0.55"/><circle cx="34.5" cy="294.0" r="0.85" fill="#d870d4" stroke="#c33cbe" stroke-width="0.55"/><circle cx="35.3" cy="295.0" r="0.85" fill="#d870d4" stroke="#c33cbe" stroke-width="0.55"/><circle cx="36.1" cy="295.1" r="0.85" fill="#d870d4" stroke="#c33cbe" stroke-width="0.55"/><circle cx="36.9" cy="294.0" r="0.85" fill="#d870d4" stroke="#c33cbe" stroke-width="0.55"/><circle cx="37.7" cy="294.1" r="0.85" fill="#d870d4" stroke="#c33cbe" stroke-width="0.55"/><circle cx="38.6" cy="294.5" r="0.85" fill="#d870d4" stroke="#c33cbe" stroke-width="0.55"/><circle cx="39.4" cy="293.7" r="0.85" fill="#d870d4" stroke="#c33cbe" stroke-width="0.55"/><circle cx="40.2" cy="297.2" r="0.85" fill="#d870d4" stroke="#c33cbe" stroke-width="0.55"/><circle cx="41.0" cy="294.8" r="0.85" fill="#d870d4" stroke="#c33cbe" stroke-width="0.55"/><circle cx="41.8" cy="294.3" r="0.85" fill="#d870d4" stroke="#c33cbe" stroke-width="0.55"/><circle cx="42.6" cy="293.7" r="0.85" fill="#d870d4" stroke="#c33cbe" stroke-width="0.55"/><circle cx="43.4" cy="294.4" r="0.85" fill="#d870d4" stroke="#c33cbe" stroke-width="0.55"/><circle cx="44.2" cy="293.9" r="0.85" fill="#d870d4" stroke="#c33cbe" stroke-width="0.55"/><circle cx="45.1" cy="294.1" r="0.85" fill="#d870d4" stroke="#c33cbe" stroke-width="0.55"/><circle cx="45.9" cy="294.7" r="0.85" fill="#d870d4" stroke="#c33cbe" stroke-width="0.55"/><circle cx="46.7" cy="293.8" r="0.85" fill="#d870d4" stroke="#c33cbe" stroke-width="0.55"/><circle cx="47.5" cy="293.9" r="0.85" fill="#d870d4" stroke="#c33cbe" stroke-width="0.55"/><circle cx="48.3" cy="294.5" r="0.85" fill="#d870d4" stroke="#c33cbe" stroke-width="0.55"/><circle cx="49.1" cy="294.2" r="0.85" fill="#d870d4" stroke="#c33cbe" stroke-width="0.55"/><circle cx="49.9" cy="298.3" r="0.85" fill="#d870d4" stroke="#c33cbe" stroke-width="0.55"/><circle cx="50.7" cy="294.9" r="0.85" fill="#d870d4" stroke="#c33cbe" stroke-width="0.55"/><circle cx="51.5" cy="294.0" r="0.85" fill="#d870d4" stroke="#c33cbe" stroke-width="0.55"/><circle cx="52.4" cy="295.0" r="0.85" fill="#d870d4" stroke="#c33cbe" stroke-width="0.55"/><circle cx="53.2" cy="294.8" r="0.85" fill="#d870d4" stroke="#c33cbe" stroke-width="0.55"/><circle cx="54.0" cy="294.3" r="0.85" fill="#d870d4" stroke="#c33cbe" stroke-width="0.55"/><circle cx="54.8" cy="294.7" r="0.85" fill="#d870d4" stroke="#c33cbe" stroke-width="0.55"/><circle cx="55.6" cy="293.5" r="0.85" fill="#d870d4" stroke="#c33cbe" stroke-width="0.55"/><circle cx="56.4" cy="295.0" r="0.85" fill="#d870d4" stroke="#c33cbe" stroke-width="0.55"/><circle cx="57.2" cy="295.0" r="0.85" fill="#d870d4" stroke="#c33cbe" stroke-width="0.55"/><circle cx="58.0" cy="293.5" r="0.85" fill="#d870d4" stroke="#c33cbe" stroke-width="0.55"/><circle cx="58.9" cy="293.9" r="0.85" fill="#d870d4" stroke="#c33cbe" stroke-width="0.55"/><circle cx="59.7" cy="294.9" r="0.85" fill="#d870d4" stroke="#c33cbe" stroke-width="0.55"/><circle cx="60.5" cy="295.0" r="0.85" fill="#d870d4" stroke="#c33cbe" stroke-width="0.55"/><circle cx="61.3" cy="294.5" r="0.85" fill="#d870d4" stroke="#c33cbe" stroke-width="0.55"/><circle cx="62.1" cy="295.9" r="0.85" fill="#d870d4" stroke="#c33cbe" stroke-width="0.55"/><circle cx="62.9" cy="294.4" r="0.85" fill="#d870d4" stroke="#c33cbe" stroke-width="0.55"/><circle cx="63.7" cy="294.4" r="0.85" fill="#d870d4" stroke="#c33cbe" stroke-width="0.55"/><circle cx="64.5" cy="299.2" r="0.85" fill="#d870d4" stroke="#c33cbe" stroke-width="0.55"/><circle cx="65.4" cy="293.6" r="0.85" fill="#d870d4" stroke="#c33cbe" stroke-width="0.55"/><circle cx="66.2" cy="294.2" r="0.85" fill="#d870d4" stroke="#c33cbe" stroke-width="0.55"/><circle cx="67.0" cy="294.5" r="0.85" fill="#d870d4" stroke="#c33cbe" stroke-width="0.55"/><circle cx="67.8" cy="294.0" r="0.85" fill="#d870d4" stroke="#c33cbe" stroke-width="0.55"/><circle cx="68.6" cy="293.9" r="0.85" fill="#d870d4" stroke="#c33cbe" stroke-width="0.55"/><circle cx="69.4" cy="293.7" r="0.85" fill="#d870d4" stroke="#c33cbe" stroke-width="0.55"/><circle cx="70.2" cy="294.1" r="0.85" fill="#d870d4" stroke="#c33cbe" stroke-width="0.55"/><circle cx="71.0" cy="294.7" r="0.85" fill="#d870d4" stroke="#c33cbe" stroke-width="0.55"/><circle cx="71.8" cy="295.1" r="0.85" fill="#d870d4" stroke="#c33cbe" stroke-width="0.55"/><circle cx="72.7" cy="293.9" r="0.85" fill="#d870d4" stroke="#c33cbe" stroke-width="0.55"/><circle cx="73.5" cy="294.1" r="0.85" fill="#d870d4" stroke="#c33cbe" stroke-width="0.55"/><circle cx="74.3" cy="294.5" r="0.85" fill="#d870d4" stroke="#c33cbe" stroke-width="0.55"/><circle cx="75.1" cy="294.1" r="0.85" fill="#d870d4" stroke="#c33cbe" stroke-width="0.55"/><circle cx="75.9" cy="294.0" r="0.85" fill="#d870d4" stroke="#c33cbe" stroke-width="0.55"/><circle cx="76.7" cy="294.9" r="0.85" fill="#d870d4" stroke="#c33cbe" stroke-width="0.55"/><circle cx="77.5" cy="293.9" r="0.85" fill="#d870d4" stroke="#c33cbe" stroke-width="0.55"/><circle cx="78.3" cy="294.4" r="0.85" fill="#d870d4" stroke="#c33cbe" stroke-width="0.55"/><circle cx="79.2" cy="295.2" r="0.85" fill="#d870d4" stroke="#c33cbe" stroke-width="0.55"/><circle cx="80.0" cy="294.9" r="0.85" fill="#d870d4" stroke="#c33cbe" stroke-width="0.55"/><circle cx="80.8" cy="293.6" r="0.85" fill="#d870d4" stroke="#c33cbe" stroke-width="0.55"/><circle cx="81.6" cy="295.0" r="0.85" fill="#d870d4" stroke="#c33cbe" stroke-width="0.55"/><circle cx="82.4" cy="294.3" r="0.85" fill="#d870d4" stroke="#c33cbe" stroke-width="0.55"/><circle cx="83.2" cy="294.3" r="0.85" fill="#d870d4" stroke="#c33cbe" stroke-width="0.55"/><circle cx="84.0" cy="293.8" r="0.85" fill="#d870d4" stroke="#c33cbe" stroke-width="0.55"/><circle cx="84.8" cy="294.5" r="0.85" fill="#d870d4" stroke="#c33cbe" stroke-width="0.55"/><circle cx="85.6" cy="294.9" r="0.85" fill="#d870d4" stroke="#c33cbe" stroke-width="0.55"/><circle cx="86.5" cy="294.5" r="0.85" fill="#d870d4" stroke="#c33cbe" stroke-width="0.55"/><circle cx="87.3" cy="295.0" r="0.85" fill="#d870d4" stroke="#c33cbe" stroke-width="0.55"/><circle cx="88.1" cy="294.6" r="0.85" fill="#d870d4" stroke="#c33cbe" stroke-width="0.55"/><circle cx="88.9" cy="296.6" r="0.85" fill="#d870d4" stroke="#c33cbe" stroke-width="0.55"/><circle cx="89.7" cy="296.5" r="0.85" fill="#d870d4" stroke="#c33cbe" stroke-width="0.55"/><circle cx="90.5" cy="294.6" r="0.85" fill="#d870d4" stroke="#c33cbe" stroke-width="0.55"/><circle cx="91.3" cy="294.8" r="0.85" fill="#d870d4" stroke="#c33cbe" stroke-width="0.55"/><circle cx="92.1" cy="293.6" r="0.85" fill="#d870d4" stroke="#c33cbe" stroke-width="0.55"/><circle cx="93.0" cy="294.8" r="0.85" fill="#d870d4" stroke="#c33cbe" stroke-width="0.55"/><circle cx="93.8" cy="294.5" r="0.85" fill="#d870d4" stroke="#c33cbe" stroke-width="0.55"/><circle cx="94.6" cy="295.0" r="0.85" fill="#d870d4" stroke="#c33cbe" stroke-width="0.55"/><circle cx="95.4" cy="293.8" r="0.85" fill="#d870d4" stroke="#c33cbe" stroke-width="0.55"/><circle cx="96.2" cy="294.4" r="0.85" fill="#d870d4" stroke="#c33cbe" stroke-width="0.55"/><circle cx="97.0" cy="294.8" r="0.85" fill="#d870d4" stroke="#c33cbe" stroke-width="0.55"/><circle cx="97.8" cy="294.6" r="0.85" fill="#d870d4" stroke="#c33cbe" stroke-width="0.55"/><circle cx="98.6" cy="293.8" r="0.85" fill="#d870d4" stroke="#c33cbe" stroke-width="0.55"/><circle cx="99.5" cy="294.4" r="0.85" fill="#d870d4" stroke="#c33cbe" stroke-width="0.55"/><circle cx="100.3" cy="294.3" r="0.85" fill="#d870d4" stroke="#c33cbe" stroke-width="0.55"/><circle cx="101.1" cy="299.3" r="0.85" fill="#d870d4" stroke="#c33cbe" stroke-width="0.55"/><circle cx="101.9" cy="294.8" r="0.85" fill="#d870d4" stroke="#c33cbe" stroke-width="0.55"/><circle cx="102.7" cy="294.8" r="0.85" fill="#d870d4" stroke="#c33cbe" stroke-width="0.55"/><circle cx="103.5" cy="294.9" r="0.85" fill="#d870d4" stroke="#c33cbe" stroke-width="0.55"/><circle cx="104.3" cy="296.8" r="0.85" fill="#d870d4" stroke="#c33cbe" stroke-width="0.55"/><circle cx="105.1" cy="294.7" r="0.85" fill="#d870d4" stroke="#c33cbe" stroke-width="0.55"/><circle cx="105.9" cy="294.5" r="0.85" fill="#d870d4" stroke="#c33cbe" stroke-width="0.55"/><circle cx="106.8" cy="294.1" r="0.85" fill="#d870d4" stroke="#c33cbe" stroke-width="0.55"/><circle cx="107.6" cy="293.6" r="0.85" fill="#d870d4" stroke="#c33cbe" stroke-width="0.55"/><circle cx="108.4" cy="295.1" r="0.85" fill="#d870d4" stroke="#c33cbe" stroke-width="0.55"/><circle cx="109.2" cy="293.6" r="0.85" fill="#d870d4" stroke="#c33cbe" stroke-width="0.55"/><circle cx="110.0" cy="295.0" r="0.85" fill="#d870d4" stroke="#c33cbe" stroke-width="0.55"/><circle cx="110.8" cy="294.1" r="0.85" fill="#d870d4" stroke="#c33cbe" stroke-width="0.55"/><circle cx="111.6" cy="295.6" r="0.85" fill="#d870d4" stroke="#c33cbe" stroke-width="0.55"/><circle cx="112.4" cy="294.8" r="0.85" fill="#d870d4" stroke="#c33cbe" stroke-width="0.55"/><circle cx="113.3" cy="296.8" r="0.85" fill="#d870d4" stroke="#c33cbe" stroke-width="0.55"/><circle cx="114.1" cy="294.6" r="0.85" fill="#d870d4" stroke="#c33cbe" stroke-width="0.55"/><circle cx="114.9" cy="293.6" r="0.85" fill="#d870d4" stroke="#c33cbe" stroke-width="0.55"/><circle cx="115.7" cy="294.9" r="0.85" fill="#d870d4" stroke="#c33cbe" stroke-width="0.55"/><circle cx="116.5" cy="294.2" r="0.85" fill="#d870d4" stroke="#c33cbe" stroke-width="0.55"/><circle cx="117.3" cy="294.1" r="0.85" fill="#d870d4" stroke="#c33cbe" stroke-width="0.55"/><circle cx="118.1" cy="293.8" r="0.85" fill="#d870d4" stroke="#c33cbe" stroke-width="0.55"/><circle cx="118.9" cy="294.9" r="0.85" fill="#d870d4" stroke="#c33cbe" stroke-width="0.55"/><circle cx="119.8" cy="294.3" r="0.85" fill="#d870d4" stroke="#c33cbe" stroke-width="0.55"/><circle cx="120.6" cy="294.5" r="0.85" fill="#d870d4" stroke="#c33cbe" stroke-width="0.55"/><circle cx="121.4" cy="294.3" r="0.85" fill="#d870d4" stroke="#c33cbe" stroke-width="0.55"/><circle cx="122.2" cy="294.8" r="0.85" fill="#d870d4" stroke="#c33cbe" stroke-width="0.55"/><circle cx="123.0" cy="299.8" r="0.85" fill="#d870d4" stroke="#c33cbe" stroke-width="0.55"/><circle cx="123.8" cy="295.0" r="0.85" fill="#d870d4" stroke="#c33cbe" stroke-width="0.55"/><circle cx="124.6" cy="294.4" r="0.85" fill="#d870d4" stroke="#c33cbe" stroke-width="0.55"/><circle cx="125.4" cy="293.7" r="0.85" fill="#d870d4" stroke="#c33cbe" stroke-width="0.55"/><circle cx="126.2" cy="296.4" r="0.85" fill="#d870d4" stroke="#c33cbe" stroke-width="0.55"/><circle cx="127.1" cy="294.1" r="0.85" fill="#d870d4" stroke="#c33cbe" stroke-width="0.55"/><circle cx="127.9" cy="294.6" r="0.85" fill="#d870d4" stroke="#c33cbe" stroke-width="0.55"/><circle cx="128.7" cy="293.5" r="0.85" fill="#d870d4" stroke="#c33cbe" stroke-width="0.55"/><circle cx="129.5" cy="296.1" r="0.85" fill="#d870d4" stroke="#c33cbe" stroke-width="0.55"/><circle cx="130.3" cy="296.1" r="0.85" fill="#d870d4" stroke="#c33cbe" stroke-width="0.55"/><circle cx="131.1" cy="294.6" r="0.85" fill="#d870d4" stroke="#c33cbe" stroke-width="0.55"/><circle cx="131.9" cy="294.3" r="0.85" fill="#d870d4" stroke="#c33cbe" stroke-width="0.55"/><circle cx="132.7" cy="293.7" r="0.85" fill="#d870d4" stroke="#c33cbe" stroke-width="0.55"/><circle cx="133.6" cy="296.2" r="0.85" fill="#d870d4" stroke="#c33cbe" stroke-width="0.55"/><circle cx="134.4" cy="293.7" r="0.85" fill="#d870d4" stroke="#c33cbe" stroke-width="0.55"/><circle cx="135.2" cy="294.4" r="0.85" fill="#d870d4" stroke="#c33cbe" stroke-width="0.55"/><circle cx="136.0" cy="293.9" r="0.85" fill="#d870d4" stroke="#c33cbe" stroke-width="0.55"/><circle cx="136.8" cy="294.5" r="0.85" fill="#d870d4" stroke="#c33cbe" stroke-width="0.55"/><circle cx="137.6" cy="294.3" r="0.85" fill="#d870d4" stroke="#c33cbe" stroke-width="0.55"/><circle cx="138.4" cy="294.7" r="0.85" fill="#d870d4" stroke="#c33cbe" stroke-width="0.55"/><circle cx="139.2" cy="294.5" r="0.85" fill="#d870d4" stroke="#c33cbe" stroke-width="0.55"/><circle cx="140.1" cy="294.7" r="0.85" fill="#d870d4" stroke="#c33cbe" stroke-width="0.55"/><circle cx="140.9" cy="293.5" r="0.85" fill="#d870d4" stroke="#c33cbe" stroke-width="0.55"/><circle cx="141.7" cy="293.8" r="0.85" fill="#d870d4" stroke="#c33cbe" stroke-width="0.55"/><circle cx="142.5" cy="294.7" r="0.85" fill="#d870d4" stroke="#c33cbe" stroke-width="0.55"/><circle cx="143.3" cy="294.2" r="0.85" fill="#d870d4" stroke="#c33cbe" stroke-width="0.55"/><circle cx="144.1" cy="293.9" r="0.85" fill="#d870d4" stroke="#c33cbe" stroke-width="0.55"/><circle cx="144.9" cy="295.7" r="0.85" fill="#d870d4" stroke="#c33cbe" stroke-width="0.55"/><circle cx="145.7" cy="295.1" r="0.85" fill="#d870d4" stroke="#c33cbe" stroke-width="0.55"/><circle cx="146.5" cy="295.2" r="0.85" fill="#d870d4" stroke="#c33cbe" stroke-width="0.55"/><circle cx="147.4" cy="293.6" r="0.85" fill="#d870d4" stroke="#c33cbe" stroke-width="0.55"/><circle cx="148.2" cy="294.1" r="0.85" fill="#d870d4" stroke="#c33cbe" stroke-width="0.55"/><circle cx="149.0" cy="293.6" r="0.85" fill="#d870d4" stroke="#c33cbe" stroke-width="0.55"/><circle cx="149.8" cy="294.1" r="0.85" fill="#d870d4" stroke="#c33cbe" stroke-width="0.55"/><circle cx="150.6" cy="294.0" r="0.85" fill="#d870d4" stroke="#c33cbe" stroke-width="0.55"/><circle cx="151.4" cy="294.0" r="0.85" fill="#d870d4" stroke="#c33cbe" stroke-width="0.55"/><circle cx="152.2" cy="294.1" r="0.85" fill="#d870d4" stroke="#c33cbe" stroke-width="0.55"/><circle cx="153.0" cy="293.9" r="0.85" fill="#d870d4" stroke="#c33cbe" stroke-width="0.55"/><circle cx="153.9" cy="297.2" r="0.85" fill="#d870d4" stroke="#c33cbe" stroke-width="0.55"/><circle cx="154.7" cy="293.6" r="0.85" fill="#d870d4" stroke="#c33cbe" stroke-width="0.55"/><circle cx="155.5" cy="294.6" r="0.85" fill="#d870d4" stroke="#c33cbe" stroke-width="0.55"/><circle cx="156.3" cy="293.9" r="0.85" fill="#d870d4" stroke="#c33cbe" stroke-width="0.55"/><circle cx="157.1" cy="294.8" r="0.85" fill="#d870d4" stroke="#c33cbe" stroke-width="0.55"/><circle cx="157.9" cy="294.5" r="0.85" fill="#d870d4" stroke="#c33cbe" stroke-width="0.55"/><circle cx="158.7" cy="294.5" r="0.85" fill="#d870d4" stroke="#c33cbe" stroke-width="0.55"/><circle cx="159.5" cy="293.6" r="0.85" fill="#d870d4" stroke="#c33cbe" stroke-width="0.55"/><circle cx="160.3" cy="297.2" r="0.85" fill="#d870d4" stroke="#c33cbe" stroke-width="0.55"/><circle cx="161.2" cy="296.3" r="0.85" fill="#d870d4" stroke="#c33cbe" stroke-width="0.55"/><circle cx="162.0" cy="294.4" r="0.85" fill="#d870d4" stroke="#c33cbe" stroke-width="0.55"/><circle cx="162.8" cy="296.2" r="0.85" fill="#d870d4" stroke="#c33cbe" stroke-width="0.55"/><circle cx="163.6" cy="293.5" r="0.85" fill="#d870d4" stroke="#c33cbe" stroke-width="0.55"/><circle cx="164.4" cy="294.5" r="0.85" fill="#d870d4" stroke="#c33cbe" stroke-width="0.55"/><circle cx="165.2" cy="296.9" r="0.85" fill="#d870d4" stroke="#c33cbe" stroke-width="0.55"/><circle cx="166.0" cy="295.2" r="0.85" fill="#d870d4" stroke="#c33cbe" stroke-width="0.55"/><circle cx="166.8" cy="297.0" r="0.85" fill="#d870d4" stroke="#c33cbe" stroke-width="0.55"/><circle cx="167.7" cy="295.1" r="0.85" fill="#d870d4" stroke="#c33cbe" stroke-width="0.55"/><circle cx="168.5" cy="295.0" r="0.85" fill="#d870d4" stroke="#c33cbe" stroke-width="0.55"/><circle cx="169.3" cy="296.8" r="0.85" fill="#d870d4" stroke="#c33cbe" stroke-width="0.55"/><circle cx="170.1" cy="294.9" r="0.85" fill="#d870d4" stroke="#c33cbe" stroke-width="0.55"/><circle cx="170.9" cy="296.0" r="0.85" fill="#d870d4" stroke="#c33cbe" stroke-width="0.55"/><circle cx="171.7" cy="294.0" r="0.85" fill="#d870d4" stroke="#c33cbe" stroke-width="0.55"/><circle cx="172.5" cy="296.0" r="0.85" fill="#d870d4" stroke="#c33cbe" stroke-width="0.55"/><circle cx="173.3" cy="293.6" r="0.85" fill="#d870d4" stroke="#c33cbe" stroke-width="0.55"/><circle cx="174.2" cy="293.5" r="0.85" fill="#d870d4" stroke="#c33cbe" stroke-width="0.55"/><circle cx="175.0" cy="295.2" r="0.85" fill="#d870d4" stroke="#c33cbe" stroke-width="0.55"/><circle cx="175.8" cy="295.8" r="0.85" fill="#d870d4" stroke="#c33cbe" stroke-width="0.55"/><circle cx="176.6" cy="296.0" r="0.85" fill="#d870d4" stroke="#c33cbe" stroke-width="0.55"/><circle cx="177.4" cy="293.7" r="0.85" fill="#d870d4" stroke="#c33cbe" stroke-width="0.55"/><circle cx="178.2" cy="295.1" r="0.85" fill="#d870d4" stroke="#c33cbe" stroke-width="0.55"/><circle cx="179.0" cy="294.2" r="0.85" fill="#d870d4" stroke="#c33cbe" stroke-width="0.55"/><circle cx="179.8" cy="294.0" r="0.85" fill="#d870d4" stroke="#c33cbe" stroke-width="0.55"/><circle cx="180.6" cy="299.2" r="0.85" fill="#d870d4" stroke="#c33cbe" stroke-width="0.55"/><circle cx="181.5" cy="294.1" r="0.85" fill="#d870d4" stroke="#c33cbe" stroke-width="0.55"/><circle cx="182.3" cy="294.6" r="0.85" fill="#d870d4" stroke="#c33cbe" stroke-width="0.55"/><circle cx="183.1" cy="293.6" r="0.85" fill="#d870d4" stroke="#c33cbe" stroke-width="0.55"/><circle cx="183.9" cy="294.2" r="0.85" fill="#d870d4" stroke="#c33cbe" stroke-width="0.55"/><circle cx="184.7" cy="295.1" r="0.85" fill="#d870d4" stroke="#c33cbe" stroke-width="0.55"/><circle cx="185.5" cy="294.0" r="0.85" fill="#d870d4" stroke="#c33cbe" stroke-width="0.55"/><circle cx="186.3" cy="294.6" r="0.85" fill="#d870d4" stroke="#c33cbe" stroke-width="0.55"/><circle cx="187.1" cy="293.5" r="0.85" fill="#d870d4" stroke="#c33cbe" stroke-width="0.55"/><circle cx="188.0" cy="294.2" r="0.85" fill="#d870d4" stroke="#c33cbe" stroke-width="0.55"/><circle cx="188.8" cy="294.5" r="0.85" fill="#d870d4" stroke="#c33cbe" stroke-width="0.55"/><circle cx="189.6" cy="294.6" r="0.85" fill="#d870d4" stroke="#c33cbe" stroke-width="0.55"/><circle cx="190.4" cy="294.2" r="0.85" fill="#d870d4" stroke="#c33cbe" stroke-width="0.55"/><circle cx="191.2" cy="293.8" r="0.85" fill="#d870d4" stroke="#c33cbe" stroke-width="0.55"/><circle cx="192.0" cy="295.2" r="0.85" fill="#d870d4" stroke="#c33cbe" stroke-width="0.55"/><circle cx="192.8" cy="294.5" r="0.85" fill="#d870d4" stroke="#c33cbe" stroke-width="0.55"/><circle cx="193.6" cy="293.8" r="0.85" fill="#d870d4" stroke="#c33cbe" stroke-width="0.55"/><circle cx="194.5" cy="295.1" r="0.85" fill="#d870d4" stroke="#c33cbe" stroke-width="0.55"/><circle cx="195.3" cy="293.8" r="0.85" fill="#d870d4" stroke="#c33cbe" stroke-width="0.55"/><circle cx="196.1" cy="294.2" r="0.85" fill="#d870d4" stroke="#c33cbe" stroke-width="0.55"/><circle cx="196.9" cy="293.7" r="0.85" fill="#d870d4" stroke="#c33cbe" stroke-width="0.55"/><circle cx="197.7" cy="294.0" r="0.85" fill="#d870d4" stroke="#c33cbe" stroke-width="0.55"/><circle cx="198.5" cy="294.6" r="0.85" fill="#d870d4" stroke="#c33cbe" stroke-width="0.55"/><circle cx="199.3" cy="295.9" r="0.85" fill="#d870d4" stroke="#c33cbe" stroke-width="0.55"/><circle cx="200.1" cy="293.9" r="0.85" fill="#d870d4" stroke="#c33cbe" stroke-width="0.55"/><circle cx="200.9" cy="294.8" r="0.85" fill="#d870d4" stroke="#c33cbe" stroke-width="0.55"/><circle cx="201.8" cy="294.0" r="0.85" fill="#d870d4" stroke="#c33cbe" stroke-width="0.55"/><circle cx="202.6" cy="294.9" r="0.85" fill="#d870d4" stroke="#c33cbe" stroke-width="0.55"/><circle cx="203.4" cy="293.9" r="0.85" fill="#d870d4" stroke="#c33cbe" stroke-width="0.55"/><circle cx="204.2" cy="294.4" r="0.85" fill="#d870d4" stroke="#c33cbe" stroke-width="0.55"/><circle cx="205.0" cy="295.9" r="0.85" fill="#d870d4" stroke="#c33cbe" stroke-width="0.55"/><circle cx="205.8" cy="294.2" r="0.85" fill="#d870d4" stroke="#c33cbe" stroke-width="0.55"/><circle cx="206.6" cy="293.7" r="0.85" fill="#d870d4" stroke="#c33cbe" stroke-width="0.55"/><circle cx="207.4" cy="294.4" r="0.85" fill="#d870d4" stroke="#c33cbe" stroke-width="0.55"/><circle cx="208.3" cy="294.9" r="0.85" fill="#d870d4" stroke="#c33cbe" stroke-width="0.55"/><circle cx="209.1" cy="294.9" r="0.85" fill="#d870d4" stroke="#c33cbe" stroke-width="0.55"/><circle cx="209.9" cy="294.6" r="0.85" fill="#d870d4" stroke="#c33cbe" stroke-width="0.55"/><circle cx="210.7" cy="294.5" r="0.85" fill="#d870d4" stroke="#c33cbe" stroke-width="0.55"/><circle cx="211.5" cy="295.0" r="0.85" fill="#d870d4" stroke="#c33cbe" stroke-width="0.55"/><circle cx="212.3" cy="296.6" r="0.85" fill="#d870d4" stroke="#c33cbe" stroke-width="0.55"/><circle cx="213.1" cy="295.9" r="0.85" fill="#d870d4" stroke="#c33cbe" stroke-width="0.55"/><circle cx="213.9" cy="294.2" r="0.85" fill="#d870d4" stroke="#c33cbe" stroke-width="0.55"/><circle cx="214.8" cy="294.3" r="0.85" fill="#d870d4" stroke="#c33cbe" stroke-width="0.55"/><circle cx="215.6" cy="295.5" r="0.85" fill="#d870d4" stroke="#c33cbe" stroke-width="0.55"/><circle cx="216.4" cy="294.4" r="0.85" fill="#d870d4" stroke="#c33cbe" stroke-width="0.55"/><circle cx="217.2" cy="294.8" r="0.85" fill="#d870d4" stroke="#c33cbe" stroke-width="0.55"/><circle cx="218.0" cy="294.5" r="0.85" fill="#d870d4" stroke="#c33cbe" stroke-width="0.55"/><circle cx="218.8" cy="293.9" r="0.85" fill="#d870d4" stroke="#c33cbe" stroke-width="0.55"/><circle cx="219.6" cy="293.5" r="0.85" fill="#d870d4" stroke="#c33cbe" stroke-width="0.55"/><circle cx="220.4" cy="295.2" r="0.85" fill="#d870d4" stroke="#c33cbe" stroke-width="0.55"/><circle cx="221.2" cy="294.9" r="0.85" fill="#d870d4" stroke="#c33cbe" stroke-width="0.55"/><circle cx="222.1" cy="296.3" r="0.85" fill="#d870d4" stroke="#c33cbe" stroke-width="0.55"/><circle cx="222.9" cy="294.4" r="0.85" fill="#d870d4" stroke="#c33cbe" stroke-width="0.55"/><circle cx="223.7" cy="293.6" r="0.85" fill="#d870d4" stroke="#c33cbe" stroke-width="0.55"/><circle cx="224.5" cy="296.6" r="0.85" fill="#d870d4" stroke="#c33cbe" stroke-width="0.55"/><circle cx="225.3" cy="296.8" r="0.85" fill="#d870d4" stroke="#c33cbe" stroke-width="0.55"/><circle cx="226.1" cy="294.1" r="0.85" fill="#d870d4" stroke="#c33cbe" stroke-width="0.55"/><circle cx="226.9" cy="294.1" r="0.85" fill="#d870d4" stroke="#c33cbe" stroke-width="0.55"/><circle cx="227.7" cy="294.4" r="0.85" fill="#d870d4" stroke="#c33cbe" stroke-width="0.55"/><circle cx="228.6" cy="293.5" r="0.85" fill="#d870d4" stroke="#c33cbe" stroke-width="0.55"/><circle cx="229.4" cy="294.8" r="0.85" fill="#d870d4" stroke="#c33cbe" stroke-width="0.55"/><circle cx="230.2" cy="296.6" r="0.85" fill="#d870d4" stroke="#c33cbe" stroke-width="0.55"/><circle cx="231.0" cy="293.6" r="0.85" fill="#d870d4" stroke="#c33cbe" stroke-width="0.55"/><circle cx="231.8" cy="295.1" r="0.85" fill="#d870d4" stroke="#c33cbe" stroke-width="0.55"/><circle cx="232.6" cy="294.0" r="0.85" fill="#d870d4" stroke="#c33cbe" stroke-width="0.55"/><circle cx="233.4" cy="293.5" r="0.85" fill="#d870d4" stroke="#c33cbe" stroke-width="0.55"/><circle cx="234.2" cy="295.9" r="0.85" fill="#d870d4" stroke="#c33cbe" stroke-width="0.55"/><circle cx="235.1" cy="294.0" r="0.85" fill="#d870d4" stroke="#c33cbe" stroke-width="0.55"/><circle cx="235.9" cy="294.2" r="0.85" fill="#d870d4" stroke="#c33cbe" stroke-width="0.55"/><circle cx="236.7" cy="295.0" r="0.85" fill="#d870d4" stroke="#c33cbe" stroke-width="0.55"/><circle cx="237.5" cy="294.8" r="0.85" fill="#d870d4" stroke="#c33cbe" stroke-width="0.55"/><circle cx="238.3" cy="299.6" r="0.85" fill="#d870d4" stroke="#c33cbe" stroke-width="0.55"/><circle cx="239.1" cy="295.0" r="0.85" fill="#d870d4" stroke="#c33cbe" stroke-width="0.55"/><circle cx="239.9" cy="295.2" r="0.85" fill="#d870d4" stroke="#c33cbe" stroke-width="0.55"/><circle cx="240.7" cy="294.9" r="0.85" fill="#d870d4" stroke="#c33cbe" stroke-width="0.55"/><circle cx="241.5" cy="296.9" r="0.85" fill="#d870d4" stroke="#c33cbe" stroke-width="0.55"/><circle cx="242.4" cy="293.7" r="0.85" fill="#d870d4" stroke="#c33cbe" stroke-width="0.55"/><circle cx="243.2" cy="295.0" r="0.85" fill="#d870d4" stroke="#c33cbe" stroke-width="0.55"/><circle cx="244.0" cy="295.1" r="0.85" fill="#d870d4" stroke="#c33cbe" stroke-width="0.55"/><circle cx="244.8" cy="293.8" r="0.85" fill="#d870d4" stroke="#c33cbe" stroke-width="0.55"/><circle cx="245.6" cy="294.4" r="0.85" fill="#d870d4" stroke="#c33cbe" stroke-width="0.55"/><circle cx="246.4" cy="293.8" r="0.85" fill="#d870d4" stroke="#c33cbe" stroke-width="0.55"/><circle cx="247.2" cy="294.1" r="0.85" fill="#d870d4" stroke="#c33cbe" stroke-width="0.55"/><circle cx="248.0" cy="299.8" r="0.85" fill="#d870d4" stroke="#c33cbe" stroke-width="0.55"/><circle cx="248.9" cy="294.3" r="0.85" fill="#d870d4" stroke="#c33cbe" stroke-width="0.55"/><circle cx="249.7" cy="299.4" r="0.85" fill="#d870d4" stroke="#c33cbe" stroke-width="0.55"/><circle cx="250.5" cy="295.0" r="0.85" fill="#d870d4" stroke="#c33cbe" stroke-width="0.55"/><circle cx="251.3" cy="293.8" r="0.85" fill="#d870d4" stroke="#c33cbe" stroke-width="0.55"/><circle cx="252.1" cy="294.9" r="0.85" fill="#d870d4" stroke="#c33cbe" stroke-width="0.55"/><circle cx="252.9" cy="294.7" r="0.85" fill="#d870d4" stroke="#c33cbe" stroke-width="0.55"/><circle cx="253.7" cy="295.0" r="0.85" fill="#d870d4" stroke="#c33cbe" stroke-width="0.55"/><circle cx="254.5" cy="295.1" r="0.85" fill="#d870d4" stroke="#c33cbe" stroke-width="0.55"/><circle cx="255.3" cy="294.1" r="0.85" fill="#d870d4" stroke="#c33cbe" stroke-width="0.55"/><circle cx="256.2" cy="294.4" r="0.85" fill="#d870d4" stroke="#c33cbe" stroke-width="0.55"/><circle cx="257.0" cy="294.8" r="0.85" fill="#d870d4" stroke="#c33cbe" stroke-width="0.55"/><circle cx="257.8" cy="294.6" r="0.85" fill="#d870d4" stroke="#c33cbe" stroke-width="0.55"/><circle cx="258.6" cy="293.5" r="0.85" fill="#d870d4" stroke="#c33cbe" stroke-width="0.55"/><circle cx="259.4" cy="295.1" r="0.85" fill="#d870d4" stroke="#c33cbe" stroke-width="0.55"/><circle cx="260.2" cy="293.7" r="0.85" fill="#d870d4" stroke="#c33cbe" stroke-width="0.55"/><circle cx="261.0" cy="296.7" r="0.85" fill="#d870d4" stroke="#c33cbe" stroke-width="0.55"/><circle cx="261.8" cy="295.2" r="0.85" fill="#d870d4" stroke="#c33cbe" stroke-width="0.55"/><circle cx="262.7" cy="294.6" r="0.85" fill="#d870d4" stroke="#c33cbe" stroke-width="0.55"/><circle cx="263.5" cy="298.4" r="0.85" fill="#d870d4" stroke="#c33cbe" stroke-width="0.55"/><circle cx="264.3" cy="294.9" r="0.85" fill="#d870d4" stroke="#c33cbe" stroke-width="0.55"/><circle cx="265.1" cy="293.6" r="0.85" fill="#d870d4" stroke="#c33cbe" stroke-width="0.55"/><circle cx="265.9" cy="294.2" r="0.85" fill="#d870d4" stroke="#c33cbe" stroke-width="0.55"/><circle cx="266.7" cy="298.5" r="0.85" fill="#d870d4" stroke="#c33cbe" stroke-width="0.55"/><circle cx="267.5" cy="294.9" r="0.85" fill="#d870d4" stroke="#c33cbe" stroke-width="0.55"/><circle cx="268.3" cy="296.2" r="0.85" fill="#d870d4" stroke="#c33cbe" stroke-width="0.55"/><circle cx="269.2" cy="294.7" r="0.85" fill="#d870d4" stroke="#c33cbe" stroke-width="0.55"/><circle cx="270.0" cy="294.2" r="0.85" fill="#d870d4" stroke="#c33cbe" stroke-width="0.55"/><circle cx="270.8" cy="293.8" r="0.85" fill="#d870d4" stroke="#c33cbe" stroke-width="0.55"/><circle cx="271.6" cy="294.9" r="0.85" fill="#d870d4" stroke="#c33cbe" stroke-width="0.55"/><circle cx="272.4" cy="296.5" r="0.85" fill="#d870d4" stroke="#c33cbe" stroke-width="0.55"/><circle cx="273.2" cy="295.1" r="0.85" fill="#d870d4" stroke="#c33cbe" stroke-width="0.55"/><circle cx="274.0" cy="294.6" r="0.85" fill="#d870d4" stroke="#c33cbe" stroke-width="0.55"/><circle cx="274.8" cy="293.7" r="0.85" fill="#d870d4" stroke="#c33cbe" stroke-width="0.55"/><circle cx="275.6" cy="295.2" r="0.85" fill="#d870d4" stroke="#c33cbe" stroke-width="0.55"/><circle cx="276.5" cy="294.4" r="0.85" fill="#d870d4" stroke="#c33cbe" stroke-width="0.55"/><circle cx="277.3" cy="294.8" r="0.85" fill="#d870d4" stroke="#c33cbe" stroke-width="0.55"/><circle cx="278.1" cy="293.8" r="0.85" fill="#d870d4" stroke="#c33cbe" stroke-width="0.55"/><circle cx="278.9" cy="294.9" r="0.85" fill="#d870d4" stroke="#c33cbe" stroke-width="0.55"/><circle cx="279.7" cy="294.2" r="0.85" fill="#d870d4" stroke="#c33cbe" stroke-width="0.55"/><circle cx="280.5" cy="296.5" r="0.85" fill="#d870d4" stroke="#c33cbe" stroke-width="0.55"/><circle cx="281.3" cy="295.0" r="0.85" fill="#d870d4" stroke="#c33cbe" stroke-width="0.55"/><circle cx="282.1" cy="293.8" r="0.85" fill="#d870d4" stroke="#c33cbe" stroke-width="0.55"/><circle cx="283.0" cy="294.7" r="0.85" fill="#d870d4" stroke="#c33cbe" stroke-width="0.55"/><circle cx="283.8" cy="294.6" r="0.85" fill="#d870d4" stroke="#c33cbe" stroke-width="0.55"/><circle cx="284.6" cy="295.1" r="0.85" fill="#d870d4" stroke="#c33cbe" stroke-width="0.55"/><circle cx="285.4" cy="293.6" r="0.85" fill="#d870d4" stroke="#c33cbe" stroke-width="0.55"/><circle cx="286.2" cy="294.3" r="0.85" fill="#d870d4" stroke="#c33cbe" stroke-width="0.55"/><circle cx="287.0" cy="294.3" r="0.85" fill="#d870d4" stroke="#c33cbe" stroke-width="0.55"/><circle cx="287.8" cy="296.9" r="0.85" fill="#d870d4" stroke="#c33cbe" stroke-width="0.55"/><circle cx="288.6" cy="295.0" r="0.85" fill="#d870d4" stroke="#c33cbe" stroke-width="0.55"/><circle cx="289.5" cy="293.8" r="0.85" fill="#d870d4" stroke="#c33cbe" stroke-width="0.55"/><circle cx="290.3" cy="296.0" r="0.85" fill="#d870d4" stroke="#c33cbe" stroke-width="0.55"/><circle cx="291.1" cy="295.2" r="0.85" fill="#d870d4" stroke="#c33cbe" stroke-width="0.55"/><circle cx="291.9" cy="294.2" r="0.85" fill="#d870d4" stroke="#c33cbe" stroke-width="0.55"/><circle cx="292.7" cy="294.0" r="0.85" fill="#d870d4" stroke="#c33cbe" stroke-width="0.55"/><circle cx="293.5" cy="296.0" r="0.85" fill="#d870d4" stroke="#c33cbe" stroke-width="0.55"/><circle cx="294.3" cy="296.4" r="0.85" fill="#d870d4" stroke="#c33cbe" stroke-width="0.55"/><circle cx="295.1" cy="294.7" r="0.85" fill="#d870d4" stroke="#c33cbe" stroke-width="0.55"/><circle cx="295.9" cy="299.6" r="0.85" fill="#d870d4" stroke="#c33cbe" stroke-width="0.55"/><circle cx="296.8" cy="293.7" r="0.85" fill="#d870d4" stroke="#c33cbe" stroke-width="0.55"/><circle cx="297.6" cy="298.6" r="0.85" fill="#d870d4" stroke="#c33cbe" stroke-width="0.55"/><circle cx="298.4" cy="293.8" r="0.85" fill="#d870d4" stroke="#c33cbe" stroke-width="0.55"/><circle cx="299.2" cy="294.5" r="0.85" fill="#d870d4" stroke="#c33cbe" stroke-width="0.55"/><circle cx="300.0" cy="293.8" r="0.85" fill="#d870d4" stroke="#c33cbe" stroke-width="0.55"/><circle cx="300.8" cy="294.5" r="0.85" fill="#d870d4" stroke="#c33cbe" stroke-width="0.55"/><circle cx="301.6" cy="293.9" r="0.85" fill="#d870d4" stroke="#c33cbe" stroke-width="0.55"/><circle cx="302.4" cy="294.8" r="0.85" fill="#d870d4" stroke="#c33cbe" stroke-width="0.55"/><circle cx="303.3" cy="294.5" r="0.85" fill="#d870d4" stroke="#c33cbe" stroke-width="0.55"/><circle cx="304.1" cy="293.8" r="0.85" fill="#d870d4" stroke="#c33cbe" stroke-width="0.55"/><circle cx="304.9" cy="293.8" r="0.85" fill="#d870d4" stroke="#c33cbe" stroke-width="0.55"/><circle cx="305.7" cy="295.1" r="0.85" fill="#d870d4" stroke="#c33cbe" stroke-width="0.55"/><circle cx="306.5" cy="293.6" r="0.85" fill="#d870d4" stroke="#c33cbe" stroke-width="0.55"/><circle cx="307.3" cy="294.8" r="0.85" fill="#d870d4" stroke="#c33cbe" stroke-width="0.55"/><circle cx="308.1" cy="294.1" r="0.85" fill="#d870d4" stroke="#c33cbe" stroke-width="0.55"/><circle cx="308.9" cy="294.3" r="0.85" fill="#d870d4" stroke="#c33cbe" stroke-width="0.55"/><circle cx="309.8" cy="296.4" r="0.85" fill="#d870d4" stroke="#c33cbe" stroke-width="0.55"/><circle cx="310.6" cy="295.6" r="0.85" fill="#d870d4" stroke="#c33cbe" stroke-width="0.55"/><circle cx="311.4" cy="293.6" r="0.85" fill="#d870d4" stroke="#c33cbe" stroke-width="0.55"/><circle cx="312.2" cy="293.8" r="0.85" fill="#d870d4" stroke="#c33cbe" stroke-width="0.55"/><circle cx="313.0" cy="293.7" r="0.85" fill="#d870d4" stroke="#c33cbe" stroke-width="0.55"/><circle cx="313.8" cy="296.8" r="0.85" fill="#d870d4" stroke="#c33cbe" stroke-width="0.55"/><circle cx="314.6" cy="294.7" r="0.85" fill="#d870d4" stroke="#c33cbe" stroke-width="0.55"/><circle cx="315.4" cy="293.6" r="0.85" fill="#d870d4" stroke="#c33cbe" stroke-width="0.55"/><circle cx="316.2" cy="294.8" r="0.85" fill="#d870d4" stroke="#c33cbe" stroke-width="0.55"/><circle cx="317.1" cy="294.5" r="0.85" fill="#d870d4" stroke="#c33cbe" stroke-width="0.55"/><circle cx="317.9" cy="294.7" r="0.85" fill="#d870d4" stroke="#c33cbe" stroke-width="0.55"/><circle cx="318.7" cy="294.1" r="0.85" fill="#d870d4" stroke="#c33cbe" stroke-width="0.55"/><circle cx="319.5" cy="298.2" r="0.85" fill="#d870d4" stroke="#c33cbe" stroke-width="0.55"/><circle cx="320.3" cy="294.8" r="0.85" fill="#d870d4" stroke="#c33cbe" stroke-width="0.55"/><circle cx="321.1" cy="294.3" r="0.85" fill="#d870d4" stroke="#c33cbe" stroke-width="0.55"/><circle cx="321.9" cy="299.6" r="0.85" fill="#d870d4" stroke="#c33cbe" stroke-width="0.55"/><circle cx="322.7" cy="294.5" r="0.85" fill="#d870d4" stroke="#c33cbe" stroke-width="0.55"/><circle cx="323.6" cy="294.8" r="0.85" fill="#d870d4" stroke="#c33cbe" stroke-width="0.55"/><circle cx="324.4" cy="295.8" r="0.85" fill="#d870d4" stroke="#c33cbe" stroke-width="0.55"/><circle cx="325.2" cy="294.2" r="0.85" fill="#d870d4" stroke="#c33cbe" stroke-width="0.55"/><circle cx="326.0" cy="294.9" r="0.85" fill="#d870d4" stroke="#c33cbe" stroke-width="0.55"/><circle cx="326.8" cy="294.4" r="0.85" fill="#d870d4" stroke="#c33cbe" stroke-width="0.55"/><circle cx="327.6" cy="294.2" r="0.85" fill="#d870d4" stroke="#c33cbe" stroke-width="0.55"/><circle cx="328.4" cy="294.7" r="0.85" fill="#d870d4" stroke="#c33cbe" stroke-width="0.55"/><circle cx="329.2" cy="294.8" r="0.85" fill="#d870d4" stroke="#c33cbe" stroke-width="0.55"/><circle cx="330.0" cy="294.6" r="0.85" fill="#d870d4" stroke="#c33cbe" stroke-width="0.55"/><circle cx="330.9" cy="295.2" r="0.85" fill="#d870d4" stroke="#c33cbe" stroke-width="0.55"/><circle cx="331.7" cy="293.7" r="0.85" fill="#d870d4" stroke="#c33cbe" stroke-width="0.55"/><circle cx="332.5" cy="294.3" r="0.85" fill="#d870d4" stroke="#c33cbe" stroke-width="0.55"/><circle cx="333.3" cy="294.7" r="0.85" fill="#d870d4" stroke="#c33cbe" stroke-width="0.55"/><circle cx="334.1" cy="294.7" r="0.85" fill="#d870d4" stroke="#c33cbe" stroke-width="0.55"/><circle cx="334.9" cy="294.9" r="0.85" fill="#d870d4" stroke="#c33cbe" stroke-width="0.55"/><circle cx="335.7" cy="296.5" r="0.85" fill="#d870d4" stroke="#c33cbe" stroke-width="0.55"/><circle cx="336.5" cy="296.5" r="0.85" fill="#d870d4" stroke="#c33cbe" stroke-width="0.55"/><circle cx="337.4" cy="295.0" r="0.85" fill="#d870d4" stroke="#c33cbe" stroke-width="0.55"/><circle cx="338.2" cy="293.6" r="0.85" fill="#d870d4" stroke="#c33cbe" stroke-width="0.55"/><circle cx="339.0" cy="295.0" r="0.85" fill="#d870d4" stroke="#c33cbe" stroke-width="0.55"/><circle cx="339.8" cy="294.6" r="0.85" fill="#d870d4" stroke="#c33cbe" stroke-width="0.55"/><circle cx="340.6" cy="294.1" r="0.85" fill="#d870d4" stroke="#c33cbe" stroke-width="0.55"/><circle cx="341.4" cy="293.8" r="0.85" fill="#d870d4" stroke="#c33cbe" stroke-width="0.55"/><circle cx="342.2" cy="293.9" r="0.85" fill="#d870d4" stroke="#c33cbe" stroke-width="0.55"/><circle cx="343.0" cy="293.9" r="0.85" fill="#d870d4" stroke="#c33cbe" stroke-width="0.55"/><circle cx="343.9" cy="293.9" r="0.85" fill="#d870d4" stroke="#c33cbe" stroke-width="0.55"/><circle cx="344.7" cy="293.6" r="0.85" fill="#d870d4" stroke="#c33cbe" stroke-width="0.55"/><circle cx="345.5" cy="299.9" r="0.85" fill="#d870d4" stroke="#c33cbe" stroke-width="0.55"/><circle cx="346.3" cy="294.2" r="0.85" fill="#d870d4" stroke="#c33cbe" stroke-width="0.55"/><circle cx="347.1" cy="293.5" r="0.85" fill="#d870d4" stroke="#c33cbe" stroke-width="0.55"/><circle cx="347.9" cy="294.5" r="0.85" fill="#d870d4" stroke="#c33cbe" stroke-width="0.55"/><circle cx="348.7" cy="293.7" r="0.85" fill="#d870d4" stroke="#c33cbe" stroke-width="0.55"/><circle cx="349.5" cy="294.6" r="0.85" fill="#d870d4" stroke="#c33cbe" stroke-width="0.55"/><circle cx="350.3" cy="294.4" r="0.85" fill="#d870d4" stroke="#c33cbe" stroke-width="0.55"/><circle cx="351.2" cy="294.7" r="0.85" fill="#d870d4" stroke="#c33cbe" stroke-width="0.55"/><circle cx="352.0" cy="294.3" r="0.85" fill="#d870d4" stroke="#c33cbe" stroke-width="0.55"/><circle cx="352.8" cy="294.7" r="0.85" fill="#d870d4" stroke="#c33cbe" stroke-width="0.55"/><circle cx="353.6" cy="293.7" r="0.85" fill="#d870d4" stroke="#c33cbe" stroke-width="0.55"/><circle cx="354.4" cy="294.4" r="0.85" fill="#d870d4" stroke="#c33cbe" stroke-width="0.55"/><circle cx="355.2" cy="294.7" r="0.85" fill="#d870d4" stroke="#c33cbe" stroke-width="0.55"/><circle cx="356.0" cy="298.9" r="0.85" fill="#d870d4" stroke="#c33cbe" stroke-width="0.55"/><circle cx="356.8" cy="296.7" r="0.85" fill="#d870d4" stroke="#c33cbe" stroke-width="0.55"/><circle cx="357.7" cy="293.8" r="0.85" fill="#d870d4" stroke="#c33cbe" stroke-width="0.55"/><circle cx="358.5" cy="294.9" r="0.85" fill="#d870d4" stroke="#c33cbe" stroke-width="0.55"/><circle cx="359.3" cy="293.6" r="0.85" fill="#d870d4" stroke="#c33cbe" stroke-width="0.55"/><circle cx="360.1" cy="296.3" r="0.85" fill="#d870d4" stroke="#c33cbe" stroke-width="0.55"/><circle cx="360.9" cy="293.6" r="0.85" fill="#d870d4" stroke="#c33cbe" stroke-width="0.55"/><circle cx="361.7" cy="294.3" r="0.85" fill="#d870d4" stroke="#c33cbe" stroke-width="0.55"/><circle cx="362.5" cy="294.3" r="0.85" fill="#d870d4" stroke="#c33cbe" stroke-width="0.55"/><circle cx="363.3" cy="294.0" r="0.85" fill="#d870d4" stroke="#c33cbe" stroke-width="0.55"/><circle cx="364.2" cy="294.6" r="0.85" fill="#d870d4" stroke="#c33cbe" stroke-width="0.55"/><circle cx="365.0" cy="294.6" r="0.85" fill="#d870d4" stroke="#c33cbe" stroke-width="0.55"/><circle cx="365.8" cy="294.0" r="0.85" fill="#d870d4" stroke="#c33cbe" stroke-width="0.55"/><circle cx="366.6" cy="295.1" r="0.85" fill="#d870d4" stroke="#c33cbe" stroke-width="0.55"/><circle cx="367.4" cy="294.5" r="0.85" fill="#d870d4" stroke="#c33cbe" stroke-width="0.55"/><circle cx="368.2" cy="294.2" r="0.85" fill="#d870d4" stroke="#c33cbe" stroke-width="0.55"/><circle cx="369.0" cy="293.5" r="0.85" fill="#d870d4" stroke="#c33cbe" stroke-width="0.55"/><circle cx="369.8" cy="294.5" r="0.85" fill="#d870d4" stroke="#c33cbe" stroke-width="0.55"/><circle cx="370.6" cy="293.5" r="0.85" fill="#d870d4" stroke="#c33cbe" stroke-width="0.55"/><circle cx="371.5" cy="294.3" r="0.85" fill="#d870d4" stroke="#c33cbe" stroke-width="0.55"/><circle cx="372.3" cy="294.9" r="0.85" fill="#d870d4" stroke="#c33cbe" stroke-width="0.55"/><circle cx="373.1" cy="293.5" r="0.85" fill="#d870d4" stroke="#c33cbe" stroke-width="0.55"/><circle cx="373.9" cy="294.3" r="0.85" fill="#d870d4" stroke="#c33cbe" stroke-width="0.55"/><circle cx="374.7" cy="296.1" r="0.85" fill="#d870d4" stroke="#c33cbe" stroke-width="0.55"/><circle cx="375.5" cy="293.5" r="0.85" fill="#d870d4" stroke="#c33cbe" stroke-width="0.55"/><circle cx="376.3" cy="294.5" r="0.85" fill="#d870d4" stroke="#c33cbe" stroke-width="0.55"/><circle cx="377.1" cy="294.7" r="0.85" fill="#d870d4" stroke="#c33cbe" stroke-width="0.55"/><circle cx="378.0" cy="294.3" r="0.85" fill="#d870d4" stroke="#c33cbe" stroke-width="0.55"/><circle cx="378.8" cy="294.9" r="0.85" fill="#d870d4" stroke="#c33cbe" stroke-width="0.55"/><circle cx="379.6" cy="294.2" r="0.85" fill="#d870d4" stroke="#c33cbe" stroke-width="0.55"/><circle cx="380.4" cy="293.5" r="0.85" fill="#d870d4" stroke="#c33cbe" stroke-width="0.55"/><circle cx="381.2" cy="295.1" r="0.85" fill="#d870d4" stroke="#c33cbe" stroke-width="0.55"/><circle cx="382.0" cy="293.9" r="0.85" fill="#d870d4" stroke="#c33cbe" stroke-width="0.55"/><circle cx="382.8" cy="294.0" r="0.85" fill="#d870d4" stroke="#c33cbe" stroke-width="0.55"/><circle cx="383.6" cy="295.8" r="0.85" fill="#d870d4" stroke="#c33cbe" stroke-width="0.55"/><circle cx="384.5" cy="294.1" r="0.85" fill="#d870d4" stroke="#c33cbe" stroke-width="0.55"/><circle cx="385.3" cy="294.4" r="0.85" fill="#d870d4" stroke="#c33cbe" stroke-width="0.55"/><circle cx="386.1" cy="294.8" r="0.85" fill="#d870d4" stroke="#c33cbe" stroke-width="0.55"/><circle cx="386.9" cy="294.3" r="0.85" fill="#d870d4" stroke="#c33cbe" stroke-width="0.55"/><circle cx="387.7" cy="294.2" r="0.85" fill="#d870d4" stroke="#c33cbe" stroke-width="0.55"/><circle cx="388.5" cy="295.0" r="0.85" fill="#d870d4" stroke="#c33cbe" stroke-width="0.55"/><circle cx="389.3" cy="293.9" r="0.85" fill="#d870d4" stroke="#c33cbe" stroke-width="0.55"/><circle cx="390.1" cy="297.0" r="0.85" fill="#d870d4" stroke="#c33cbe" stroke-width="0.55"/><circle cx="390.9" cy="293.8" r="0.85" fill="#d870d4" stroke="#c33cbe" stroke-width="0.55"/><circle cx="391.8" cy="293.8" r="0.85" fill="#d870d4" stroke="#c33cbe" stroke-width="0.55"/><circle cx="392.6" cy="295.9" r="0.85" fill="#d870d4" stroke="#c33cbe" stroke-width="0.55"/><circle cx="393.4" cy="294.0" r="0.85" fill="#d870d4" stroke="#c33cbe" stroke-width="0.55"/><circle cx="394.2" cy="294.9" r="0.85" fill="#d870d4" stroke="#c33cbe" stroke-width="0.55"/><circle cx="395.0" cy="295.0" r="0.85" fill="#d870d4" stroke="#c33cbe" stroke-width="0.55"/><circle cx="395.8" cy="294.2" r="0.85" fill="#d870d4" stroke="#c33cbe" stroke-width="0.55"/><circle cx="396.6" cy="294.4" r="0.85" fill="#d870d4" stroke="#c33cbe" stroke-width="0.55"/><circle cx="397.4" cy="295.1" r="0.85" fill="#d870d4" stroke="#c33cbe" stroke-width="0.55"/><circle cx="398.3" cy="294.2" r="0.85" fill="#d870d4" stroke="#c33cbe" stroke-width="0.55"/><circle cx="399.1" cy="294.5" r="0.85" fill="#d870d4" stroke="#c33cbe" stroke-width="0.55"/><circle cx="399.9" cy="294.8" r="0.85" fill="#d870d4" stroke="#c33cbe" stroke-width="0.55"/><circle cx="400.7" cy="295.8" r="0.85" fill="#d870d4" stroke="#c33cbe" stroke-width="0.55"/><circle cx="401.5" cy="293.7" r="0.85" fill="#d870d4" stroke="#c33cbe" stroke-width="0.55"/><circle cx="402.3" cy="294.7" r="0.85" fill="#d870d4" stroke="#c33cbe" stroke-width="0.55"/><circle cx="403.1" cy="293.6" r="0.85" fill="#d870d4" stroke="#c33cbe" stroke-width="0.55"/><circle cx="403.9" cy="293.6" r="0.85" fill="#d870d4" stroke="#c33cbe" stroke-width="0.55"/><circle cx="404.7" cy="294.5" r="0.85" fill="#d870d4" stroke="#c33cbe" stroke-width="0.55"/><circle cx="405.6" cy="294.8" r="0.85" fill="#d870d4" stroke="#c33cbe" stroke-width="0.55"/><circle cx="406.4" cy="293.7" r="0.85" fill="#d870d4" stroke="#c33cbe" stroke-width="0.55"/><circle cx="407.2" cy="293.8" r="0.85" fill="#d870d4" stroke="#c33cbe" stroke-width="0.55"/><circle cx="408.0" cy="294.9" r="0.85" fill="#d870d4" stroke="#c33cbe" stroke-width="0.55"/><circle cx="408.8" cy="294.9" r="0.85" fill="#d870d4" stroke="#c33cbe" stroke-width="0.55"/><circle cx="409.6" cy="294.7" r="0.85" fill="#d870d4" stroke="#c33cbe" stroke-width="0.55"/><circle cx="410.4" cy="295.0" r="0.85" fill="#d870d4" stroke="#c33cbe" stroke-width="0.55"/><circle cx="411.2" cy="294.6" r="0.85" fill="#d870d4" stroke="#c33cbe" stroke-width="0.55"/><circle cx="412.1" cy="295.1" r="0.85" fill="#d870d4" stroke="#c33cbe" stroke-width="0.55"/><circle cx="412.9" cy="299.3" r="0.85" fill="#d870d4" stroke="#c33cbe" stroke-width="0.55"/><circle cx="413.7" cy="294.9" r="0.85" fill="#d870d4" stroke="#c33cbe" stroke-width="0.55"/><circle cx="414.5" cy="294.8" r="0.85" fill="#d870d4" stroke="#c33cbe" stroke-width="0.55"/><circle cx="415.3" cy="296.7" r="0.85" fill="#d870d4" stroke="#c33cbe" stroke-width="0.55"/><circle cx="416.1" cy="294.0" r="0.85" fill="#d870d4" stroke="#c33cbe" stroke-width="0.55"/><circle cx="416.9" cy="295.8" r="0.85" fill="#d870d4" stroke="#c33cbe" stroke-width="0.55"/><circle cx="417.7" cy="298.4" r="0.85" fill="#d870d4" stroke="#c33cbe" stroke-width="0.55"/><circle cx="418.6" cy="294.9" r="0.85" fill="#d870d4" stroke="#c33cbe" stroke-width="0.55"/><circle cx="419.4" cy="294.0" r="0.85" fill="#d870d4" stroke="#c33cbe" stroke-width="0.55"/><circle cx="420.2" cy="293.6" r="0.85" fill="#d870d4" stroke="#c33cbe" stroke-width="0.55"/><circle cx="421.0" cy="293.6" r="0.85" fill="#d870d4" stroke="#c33cbe" stroke-width="0.55"/><circle cx="421.8" cy="294.8" r="0.85" fill="#d870d4" stroke="#c33cbe" stroke-width="0.55"/><circle cx="422.6" cy="295.0" r="0.85" fill="#d870d4" stroke="#c33cbe" stroke-width="0.55"/><circle cx="423.4" cy="294.8" r="0.85" fill="#d870d4" stroke="#c33cbe" stroke-width="0.55"/><circle cx="424.2" cy="294.2" r="0.85" fill="#d870d4" stroke="#c33cbe" stroke-width="0.55"/><circle cx="425.0" cy="294.8" r="0.85" fill="#d870d4" stroke="#c33cbe" stroke-width="0.55"/><circle cx="425.9" cy="294.9" r="0.85" fill="#d870d4" stroke="#c33cbe" stroke-width="0.55"/><circle cx="426.7" cy="295.0" r="0.85" fill="#d870d4" stroke="#c33cbe" stroke-width="0.55"/><circle cx="427.5" cy="294.3" r="0.85" fill="#d870d4" stroke="#c33cbe" stroke-width="0.55"/><circle cx="428.3" cy="293.9" r="0.85" fill="#d870d4" stroke="#c33cbe" stroke-width="0.55"/><circle cx="429.1" cy="294.1" r="0.85" fill="#d870d4" stroke="#c33cbe" stroke-width="0.55"/><circle cx="429.9" cy="294.7" r="0.85" fill="#d870d4" stroke="#c33cbe" stroke-width="0.55"/><circle cx="430.7" cy="295.1" r="0.85" fill="#d870d4" stroke="#c33cbe" stroke-width="0.55"/><circle cx="431.5" cy="293.7" r="0.85" fill="#d870d4" stroke="#c33cbe" stroke-width="0.55"/><circle cx="432.4" cy="294.1" r="0.85" fill="#d870d4" stroke="#c33cbe" stroke-width="0.55"/><circle cx="433.2" cy="296.6" r="0.85" fill="#d870d4" stroke="#c33cbe" stroke-width="0.55"/><circle cx="434.0" cy="294.7" r="0.85" fill="#d870d4" stroke="#c33cbe" stroke-width="0.55"/><circle cx="434.8" cy="296.9" r="0.85" fill="#d870d4" stroke="#c33cbe" stroke-width="0.55"/><circle cx="435.6" cy="299.4" r="0.85" fill="#d870d4" stroke="#c33cbe" stroke-width="0.55"/><circle cx="436.4" cy="293.6" r="0.85" fill="#d870d4" stroke="#c33cbe" stroke-width="0.55"/><circle cx="437.2" cy="293.7" r="0.85" fill="#d870d4" stroke="#c33cbe" stroke-width="0.55"/><circle cx="438.0" cy="295.0" r="0.85" fill="#d870d4" stroke="#c33cbe" stroke-width="0.55"/><circle cx="438.9" cy="295.2" r="0.85" fill="#d870d4" stroke="#c33cbe" stroke-width="0.55"/><circle cx="439.7" cy="294.1" r="0.85" fill="#d870d4" stroke="#c33cbe" stroke-width="0.55"/><circle cx="440.5" cy="294.5" r="0.85" fill="#d870d4" stroke="#c33cbe" stroke-width="0.55"/><circle cx="441.3" cy="294.0" r="0.85" fill="#d870d4" stroke="#c33cbe" stroke-width="0.55"/><circle cx="442.1" cy="293.7" r="0.85" fill="#d870d4" stroke="#c33cbe" stroke-width="0.55"/><circle cx="442.9" cy="294.1" r="0.85" fill="#d870d4" stroke="#c33cbe" stroke-width="0.55"/><circle cx="443.7" cy="295.0" r="0.85" fill="#d870d4" stroke="#c33cbe" stroke-width="0.55"/><circle cx="444.5" cy="293.9" r="0.85" fill="#d870d4" stroke="#c33cbe" stroke-width="0.55"/><circle cx="445.3" cy="295.2" r="0.85" fill="#d870d4" stroke="#c33cbe" stroke-width="0.55"/><circle cx="446.2" cy="296.9" r="0.85" fill="#d870d4" stroke="#c33cbe" stroke-width="0.55"/><circle cx="447.0" cy="294.6" r="0.85" fill="#d870d4" stroke="#c33cbe" stroke-width="0.55"/><circle cx="447.8" cy="296.1" r="0.85" fill="#d870d4" stroke="#c33cbe" stroke-width="0.55"/><circle cx="448.6" cy="293.8" r="0.85" fill="#d870d4" stroke="#c33cbe" stroke-width="0.55"/><circle cx="449.4" cy="294.0" r="0.85" fill="#d870d4" stroke="#c33cbe" stroke-width="0.55"/><circle cx="450.2" cy="294.5" r="0.85" fill="#d870d4" stroke="#c33cbe" stroke-width="0.55"/><circle cx="451.0" cy="294.6" r="0.85" fill="#d870d4" stroke="#c33cbe" stroke-width="0.55"/><circle cx="451.8" cy="295.9" r="0.85" fill="#d870d4" stroke="#c33cbe" stroke-width="0.55"/><circle cx="452.7" cy="295.1" r="0.85" fill="#d870d4" stroke="#c33cbe" stroke-width="0.55"/><circle cx="453.5" cy="294.2" r="0.85" fill="#d870d4" stroke="#c33cbe" stroke-width="0.55"/><circle cx="454.3" cy="297.1" r="0.85" fill="#d870d4" stroke="#c33cbe" stroke-width="0.55"/><circle cx="455.1" cy="294.9" r="0.85" fill="#d870d4" stroke="#c33cbe" stroke-width="0.55"/><circle cx="455.9" cy="293.9" r="0.85" fill="#d870d4" stroke="#c33cbe" stroke-width="0.55"/><circle cx="456.7" cy="296.6" r="0.85" fill="#d870d4" stroke="#c33cbe" stroke-width="0.55"/><circle cx="457.5" cy="293.8" r="0.85" fill="#d870d4" stroke="#c33cbe" stroke-width="0.55"/><circle cx="458.3" cy="295.1" r="0.85" fill="#d870d4" stroke="#c33cbe" stroke-width="0.55"/><circle cx="459.2" cy="294.5" r="0.85" fill="#d870d4" stroke="#c33cbe" stroke-width="0.55"/><circle cx="460.0" cy="294.0" r="0.85" fill="#d870d4" stroke="#c33cbe" stroke-width="0.55"/><circle cx="460.8" cy="293.8" r="0.85" fill="#d870d4" stroke="#c33cbe" stroke-width="0.55"/><circle cx="461.6" cy="294.4" r="0.85" fill="#d870d4" stroke="#c33cbe" stroke-width="0.55"/><circle cx="462.4" cy="296.5" r="0.85" fill="#d870d4" stroke="#c33cbe" stroke-width="0.55"/><circle cx="463.2" cy="293.6" r="0.85" fill="#d870d4" stroke="#c33cbe" stroke-width="0.55"/><circle cx="464.0" cy="299.8" r="0.85" fill="#d870d4" stroke="#c33cbe" stroke-width="0.55"/><circle cx="464.8" cy="293.8" r="0.85" fill="#d870d4" stroke="#c33cbe" stroke-width="0.55"/><circle cx="465.6" cy="294.3" r="0.85" fill="#d870d4" stroke="#c33cbe" stroke-width="0.55"/><circle cx="466.5" cy="294.1" r="0.85" fill="#d870d4" stroke="#c33cbe" stroke-width="0.55"/><circle cx="467.3" cy="294.8" r="0.85" fill="#d870d4" stroke="#c33cbe" stroke-width="0.55"/><circle cx="468.1" cy="296.5" r="0.85" fill="#d870d4" stroke="#c33cbe" stroke-width="0.55"/><circle cx="468.9" cy="294.7" r="0.85" fill="#d870d4" stroke="#c33cbe" stroke-width="0.55"/><circle cx="469.7" cy="298.7" r="0.85" fill="#d870d4" stroke="#c33cbe" stroke-width="0.55"/><circle cx="470.5" cy="294.8" r="0.85" fill="#d870d4" stroke="#c33cbe" stroke-width="0.55"/><circle cx="471.3" cy="294.4" r="0.85" fill="#d870d4" stroke="#c33cbe" stroke-width="0.55"/><circle cx="472.1" cy="294.6" r="0.85" fill="#d870d4" stroke="#c33cbe" stroke-width="0.55"/><circle cx="473.0" cy="293.7" r="0.85" fill="#d870d4" stroke="#c33cbe" stroke-width="0.55"/><circle cx="473.8" cy="299.3" r="0.85" fill="#d870d4" stroke="#c33cbe" stroke-width="0.55"/><circle cx="474.6" cy="294.3" r="0.85" fill="#d870d4" stroke="#c33cbe" stroke-width="0.55"/><circle cx="475.4" cy="294.9" r="0.85" fill="#d870d4" stroke="#c33cbe" stroke-width="0.55"/><circle cx="476.2" cy="294.2" r="0.85" fill="#d870d4" stroke="#c33cbe" stroke-width="0.55"/><circle cx="477.0" cy="293.9" r="0.85" fill="#d870d4" stroke="#c33cbe" stroke-width="0.55"/><circle cx="477.8" cy="295.0" r="0.85" fill="#d870d4" stroke="#c33cbe" stroke-width="0.55"/><circle cx="478.6" cy="294.6" r="0.85" fill="#d870d4" stroke="#c33cbe" stroke-width="0.55"/><circle cx="479.5" cy="295.1" r="0.85" fill="#d870d4" stroke="#c33cbe" stroke-width="0.55"/><circle cx="480.3" cy="294.9" r="0.85" fill="#d870d4" stroke="#c33cbe" stroke-width="0.55"/><circle cx="481.1" cy="294.4" r="0.85" fill="#d870d4" stroke="#c33cbe" stroke-width="0.55"/><circle cx="481.9" cy="296.4" r="0.85" fill="#d870d4" stroke="#c33cbe" stroke-width="0.55"/><circle cx="482.7" cy="294.9" r="0.85" fill="#d870d4" stroke="#c33cbe" stroke-width="0.55"/><circle cx="483.5" cy="295.5" r="0.85" fill="#d870d4" stroke="#c33cbe" stroke-width="0.55"/><circle cx="484.3" cy="295.1" r="0.85" fill="#d870d4" stroke="#c33cbe" stroke-width="0.55"/><circle cx="485.1" cy="293.5" r="0.85" fill="#d870d4" stroke="#c33cbe" stroke-width="0.55"/><circle cx="485.9" cy="295.0" r="0.85" fill="#d870d4" stroke="#c33cbe" stroke-width="0.55"/><circle cx="486.8" cy="294.5" r="0.85" fill="#d870d4" stroke="#c33cbe" stroke-width="0.55"/><circle cx="487.6" cy="294.3" r="0.85" fill="#d870d4" stroke="#c33cbe" stroke-width="0.55"/><circle cx="488.4" cy="296.1" r="0.85" fill="#d870d4" stroke="#c33cbe" stroke-width="0.55"/><circle cx="489.2" cy="293.6" r="0.85" fill="#d870d4" stroke="#c33cbe" stroke-width="0.55"/><circle cx="490.0" cy="294.8" r="0.85" fill="#d870d4" stroke="#c33cbe" stroke-width="0.55"/><circle cx="490.8" cy="295.0" r="0.85" fill="#d870d4" stroke="#c33cbe" stroke-width="0.55"/><circle cx="491.6" cy="295.8" r="0.85" fill="#d870d4" stroke="#c33cbe" stroke-width="0.55"/><circle cx="492.4" cy="294.9" r="0.85" fill="#d870d4" stroke="#c33cbe" stroke-width="0.55"/><circle cx="493.3" cy="293.7" r="0.85" fill="#d870d4" stroke="#c33cbe" stroke-width="0.55"/><circle cx="494.1" cy="298.8" r="0.85" fill="#d870d4" stroke="#c33cbe" stroke-width="0.55"/><circle cx="494.9" cy="295.8" r="0.85" fill="#d870d4" stroke="#c33cbe" stroke-width="0.55"/><circle cx="495.7" cy="295.7" r="0.85" fill="#d870d4" stroke="#c33cbe" stroke-width="0.55"/><circle cx="496.5" cy="296.0" r="0.85" fill="#d870d4" stroke="#c33cbe" stroke-width="0.55"/><circle cx="497.3" cy="306.0" r="0.85" fill="#d870d4" stroke="#c33cbe" stroke-width="0.55"/><circle cx="498.1" cy="299.0" r="0.85" fill="#d870d4" stroke="#c33cbe" stroke-width="0.55"/><circle cx="498.9" cy="299.8" r="0.85" fill="#d870d4" stroke="#c33cbe" stroke-width="0.55"/><circle cx="499.7" cy="294.7" r="0.85" fill="#d870d4" stroke="#c33cbe" stroke-width="0.55"/><circle cx="500.6" cy="294.1" r="0.85" fill="#d870d4" stroke="#c33cbe" stroke-width="0.55"/><circle cx="501.4" cy="296.5" r="0.85" fill="#d870d4" stroke="#c33cbe" stroke-width="0.55"/><circle cx="502.2" cy="293.9" r="0.85" fill="#d870d4" stroke="#c33cbe" stroke-width="0.55"/><circle cx="503.0" cy="298.3" r="0.85" fill="#d870d4" stroke="#c33cbe" stroke-width="0.55"/><circle cx="503.8" cy="299.2" r="0.85" fill="#d870d4" stroke="#c33cbe" stroke-width="0.55"/><circle cx="504.6" cy="295.5" r="0.85" fill="#d870d4" stroke="#c33cbe" stroke-width="0.55"/><circle cx="505.4" cy="296.4" r="0.85" fill="#d870d4" stroke="#c33cbe" stroke-width="0.55"/><circle cx="506.2" cy="311.8" r="0.85" fill="#d870d4" stroke="#c33cbe" stroke-width="0.55"/><circle cx="507.1" cy="294.7" r="0.85" fill="#d870d4" stroke="#c33cbe" stroke-width="0.55"/><circle cx="507.9" cy="297.3" r="0.85" fill="#d870d4" stroke="#c33cbe" stroke-width="0.55"/><circle cx="508.7" cy="294.2" r="0.85" fill="#d870d4" stroke="#c33cbe" stroke-width="0.55"/><circle cx="509.5" cy="300.0" r="0.85" fill="#d870d4" stroke="#c33cbe" stroke-width="0.55"/><circle cx="510.3" cy="300.0" r="0.85" fill="#d870d4" stroke="#c33cbe" stroke-width="0.55"/><circle cx="511.1" cy="298.9" r="0.85" fill="#d870d4" stroke="#c33cbe" stroke-width="0.55"/><circle cx="511.9" cy="297.6" r="0.85" fill="#d870d4" stroke="#c33cbe" stroke-width="0.55"/><circle cx="512.7" cy="299.9" r="0.85" fill="#d870d4" stroke="#c33cbe" stroke-width="0.55"/><circle cx="513.6" cy="295.6" r="0.85" fill="#d870d4" stroke="#c33cbe" stroke-width="0.55"/><circle cx="514.4" cy="293.8" r="0.85" fill="#d870d4" stroke="#c33cbe" stroke-width="0.55"/><circle cx="515.2" cy="305.2" r="0.85" fill="#d870d4" stroke="#c33cbe" stroke-width="0.55"/><circle cx="516.0" cy="296.1" r="0.85" fill="#d870d4" stroke="#c33cbe" stroke-width="0.55"/><circle cx="516.8" cy="297.1" r="0.85" fill="#d870d4" stroke="#c33cbe" stroke-width="0.55"/><circle cx="517.6" cy="294.4" r="0.85" fill="#d870d4" stroke="#c33cbe" stroke-width="0.55"/><circle cx="518.4" cy="297.2" r="0.85" fill="#d870d4" stroke="#c33cbe" stroke-width="0.55"/><circle cx="519.2" cy="295.3" r="0.85" fill="#d870d4" stroke="#c33cbe" stroke-width="0.55"/><circle cx="520.0" cy="295.3" r="0.85" fill="#d870d4" stroke="#c33cbe" stroke-width="0.55"/><circle cx="520.9" cy="295.1" r="0.85" fill="#d870d4" stroke="#c33cbe" stroke-width="0.55"/><circle cx="521.7" cy="374.2" r="0.85" fill="#d870d4" stroke="#c33cbe" stroke-width="0.55"/><circle cx="522.5" cy="374.2" r="0.85" fill="#d870d4" stroke="#c33cbe" stroke-width="0.55"/><circle cx="523.3" cy="374.2" r="0.85" fill="#d870d4" stroke="#c33cbe" stroke-width="0.55"/><circle cx="524.1" cy="374.2" r="0.85" fill="#d870d4" stroke="#c33cbe" stroke-width="0.55"/><circle cx="524.9" cy="300.2" r="0.85" fill="#d870d4" stroke="#c33cbe" stroke-width="0.55"/><circle cx="525.7" cy="293.9" r="0.85" fill="#d870d4" stroke="#c33cbe" stroke-width="0.55"/><circle cx="526.5" cy="293.8" r="0.85" fill="#d870d4" stroke="#c33cbe" stroke-width="0.55"/><circle cx="527.4" cy="294.2" r="0.85" fill="#d870d4" stroke="#c33cbe" stroke-width="0.55"/><circle cx="528.2" cy="294.0" r="0.85" fill="#d870d4" stroke="#c33cbe" stroke-width="0.55"/><circle cx="529.0" cy="293.7" r="0.85" fill="#d870d4" stroke="#c33cbe" stroke-width="0.55"/><circle cx="529.8" cy="294.2" r="0.85" fill="#d870d4" stroke="#c33cbe" stroke-width="0.55"/><circle cx="530.6" cy="294.4" r="0.85" fill="#d870d4" stroke="#c33cbe" stroke-width="0.55"/><circle cx="531.4" cy="294.2" r="0.85" fill="#d870d4" stroke="#c33cbe" stroke-width="0.55"/><circle cx="532.2" cy="293.6" r="0.85" fill="#d870d4" stroke="#c33cbe" stroke-width="0.55"/><circle cx="533.0" cy="293.6" r="0.85" fill="#d870d4" stroke="#c33cbe" stroke-width="0.55"/><circle cx="533.9" cy="294.3" r="0.85" fill="#d870d4" stroke="#c33cbe" stroke-width="0.55"/><circle cx="534.7" cy="293.6" r="0.85" fill="#d870d4" stroke="#c33cbe" stroke-width="0.55"/><circle cx="535.5" cy="293.8" r="0.85" fill="#d870d4" stroke="#c33cbe" stroke-width="0.55"/><circle cx="536.3" cy="294.7" r="0.85" fill="#d870d4" stroke="#c33cbe" stroke-width="0.55"/><circle cx="537.1" cy="294.0" r="0.85" fill="#d870d4" stroke="#c33cbe" stroke-width="0.55"/><circle cx="537.9" cy="293.5" r="0.85" fill="#d870d4" stroke="#c33cbe" stroke-width="0.55"/><circle cx="538.7" cy="294.5" r="0.85" fill="#d870d4" stroke="#c33cbe" stroke-width="0.55"/><circle cx="539.5" cy="294.0" r="0.85" fill="#d870d4" stroke="#c33cbe" stroke-width="0.55"/><circle cx="540.3" cy="294.6" r="0.85" fill="#d870d4" stroke="#c33cbe" stroke-width="0.55"/><circle cx="541.2" cy="294.0" r="0.85" fill="#d870d4" stroke="#c33cbe" stroke-width="0.55"/><circle cx="542.0" cy="294.2" r="0.85" fill="#d870d4" stroke="#c33cbe" stroke-width="0.55"/><circle cx="542.8" cy="294.0" r="0.85" fill="#d870d4" stroke="#c33cbe" stroke-width="0.55"/><circle cx="543.6" cy="293.5" r="0.85" fill="#d870d4" stroke="#c33cbe" stroke-width="0.55"/><circle cx="544.4" cy="294.5" r="0.85" fill="#d870d4" stroke="#c33cbe" stroke-width="0.55"/><circle cx="545.2" cy="293.7" r="0.85" fill="#d870d4" stroke="#c33cbe" stroke-width="0.55"/><circle cx="546.0" cy="293.6" r="0.85" fill="#d870d4" stroke="#c33cbe" stroke-width="0.55"/><circle cx="546.8" cy="294.1" r="0.85" fill="#d870d4" stroke="#c33cbe" stroke-width="0.55"/><circle cx="547.7" cy="294.2" r="0.85" fill="#d870d4" stroke="#c33cbe" stroke-width="0.55"/><circle cx="548.5" cy="294.6" r="0.85" fill="#d870d4" stroke="#c33cbe" stroke-width="0.55"/><circle cx="549.3" cy="293.5" r="0.85" fill="#d870d4" stroke="#c33cbe" stroke-width="0.55"/><circle cx="550.1" cy="294.5" r="0.85" fill="#d870d4" stroke="#c33cbe" stroke-width="0.55"/><circle cx="550.9" cy="294.0" r="0.85" fill="#d870d4" stroke="#c33cbe" stroke-width="0.55"/><circle cx="551.7" cy="294.7" r="0.85" fill="#d870d4" stroke="#c33cbe" stroke-width="0.55"/><circle cx="552.5" cy="294.7" r="0.85" fill="#d870d4" stroke="#c33cbe" stroke-width="0.55"/><circle cx="553.3" cy="294.7" r="0.85" fill="#d870d4" stroke="#c33cbe" stroke-width="0.55"/><circle cx="554.2" cy="294.4" r="0.85" fill="#d870d4" stroke="#c33cbe" stroke-width="0.55"/><circle cx="555.0" cy="294.4" r="0.85" fill="#d870d4" stroke="#c33cbe" stroke-width="0.55"/><circle cx="555.8" cy="293.5" r="0.85" fill="#d870d4" stroke="#c33cbe" stroke-width="0.55"/><circle cx="556.6" cy="294.0" r="0.85" fill="#d870d4" stroke="#c33cbe" stroke-width="0.55"/><circle cx="557.4" cy="293.7" r="0.85" fill="#d870d4" stroke="#c33cbe" stroke-width="0.55"/><circle cx="558.2" cy="294.2" r="0.85" fill="#d870d4" stroke="#c33cbe" stroke-width="0.55"/><circle cx="559.0" cy="293.6" r="0.85" fill="#d870d4" stroke="#c33cbe" stroke-width="0.55"/><circle cx="559.8" cy="294.3" r="0.85" fill="#d870d4" stroke="#c33cbe" stroke-width="0.55"/><circle cx="560.6" cy="294.0" r="0.85" fill="#d870d4" stroke="#c33cbe" stroke-width="0.55"/><circle cx="561.5" cy="294.0" r="0.85" fill="#d870d4" stroke="#c33cbe" stroke-width="0.55"/><circle cx="562.3" cy="294.3" r="0.85" fill="#d870d4" stroke="#c33cbe" stroke-width="0.55"/><circle cx="563.1" cy="294.1" r="0.85" fill="#d870d4" stroke="#c33cbe" stroke-width="0.55"/><circle cx="563.9" cy="294.4" r="0.85" fill="#d870d4" stroke="#c33cbe" stroke-width="0.55"/><circle cx="564.7" cy="294.7" r="0.85" fill="#d870d4" stroke="#c33cbe" stroke-width="0.55"/><circle cx="565.5" cy="294.1" r="0.85" fill="#d870d4" stroke="#c33cbe" stroke-width="0.55"/><circle cx="566.3" cy="294.5" r="0.85" fill="#d870d4" stroke="#c33cbe" stroke-width="0.55"/><circle cx="567.1" cy="294.3" r="0.85" fill="#d870d4" stroke="#c33cbe" stroke-width="0.55"/><circle cx="568.0" cy="293.5" r="0.85" fill="#d870d4" stroke="#c33cbe" stroke-width="0.55"/><circle cx="568.8" cy="294.0" r="0.85" fill="#d870d4" stroke="#c33cbe" stroke-width="0.55"/><circle cx="569.6" cy="294.0" r="0.85" fill="#d870d4" stroke="#c33cbe" stroke-width="0.55"/><circle cx="570.4" cy="293.7" r="0.85" fill="#d870d4" stroke="#c33cbe" stroke-width="0.55"/><circle cx="571.2" cy="294.6" r="0.85" fill="#d870d4" stroke="#c33cbe" stroke-width="0.55"/><circle cx="572.0" cy="294.4" r="0.85" fill="#d870d4" stroke="#c33cbe" stroke-width="0.55"/><circle cx="572.8" cy="294.5" r="0.85" fill="#d870d4" stroke="#c33cbe" stroke-width="0.55"/><circle cx="573.6" cy="294.4" r="0.85" fill="#d870d4" stroke="#c33cbe" stroke-width="0.55"/><circle cx="574.4" cy="293.9" r="0.85" fill="#d870d4" stroke="#c33cbe" stroke-width="0.55"/><circle cx="575.3" cy="294.5" r="0.85" fill="#d870d4" stroke="#c33cbe" stroke-width="0.55"/><circle cx="576.1" cy="293.9" r="0.85" fill="#d870d4" stroke="#c33cbe" stroke-width="0.55"/><circle cx="576.9" cy="293.6" r="0.85" fill="#d870d4" stroke="#c33cbe" stroke-width="0.55"/><circle cx="577.7" cy="294.5" r="0.85" fill="#d870d4" stroke="#c33cbe" stroke-width="0.55"/><circle cx="578.5" cy="293.9" r="0.85" fill="#d870d4" stroke="#c33cbe" stroke-width="0.55"/><circle cx="579.3" cy="294.3" r="0.85" fill="#d870d4" stroke="#c33cbe" stroke-width="0.55"/><circle cx="580.1" cy="294.2" r="0.85" fill="#d870d4" stroke="#c33cbe" stroke-width="0.55"/><circle cx="580.9" cy="294.6" r="0.85" fill="#d870d4" stroke="#c33cbe" stroke-width="0.55"/><circle cx="581.8" cy="293.9" r="0.85" fill="#d870d4" stroke="#c33cbe" stroke-width="0.55"/><circle cx="582.6" cy="293.9" r="0.85" fill="#d870d4" stroke="#c33cbe" stroke-width="0.55"/><circle cx="583.4" cy="294.7" r="0.85" fill="#d870d4" stroke="#c33cbe" stroke-width="0.55"/><circle cx="584.2" cy="293.4" r="0.85" fill="#d870d4" stroke="#c33cbe" stroke-width="0.55"/><circle cx="585.0" cy="293.8" r="0.85" fill="#d870d4" stroke="#c33cbe" stroke-width="0.55"/><circle cx="585.8" cy="294.5" r="0.85" fill="#d870d4" stroke="#c33cbe" stroke-width="0.55"/><circle cx="586.6" cy="294.6" r="0.85" fill="#d870d4" stroke="#c33cbe" stroke-width="0.55"/><circle cx="587.4" cy="294.0" r="0.85" fill="#d870d4" stroke="#c33cbe" stroke-width="0.55"/><circle cx="588.3" cy="293.9" r="0.85" fill="#d870d4" stroke="#c33cbe" stroke-width="0.55"/><circle cx="589.1" cy="293.7" r="0.85" fill="#d870d4" stroke="#c33cbe" stroke-width="0.55"/><circle cx="589.9" cy="293.7" r="0.85" fill="#d870d4" stroke="#c33cbe" stroke-width="0.55"/><circle cx="590.7" cy="293.7" r="0.85" fill="#d870d4" stroke="#c33cbe" stroke-width="0.55"/><circle cx="591.5" cy="294.4" r="0.85" fill="#d870d4" stroke="#c33cbe" stroke-width="0.55"/><circle cx="592.3" cy="294.5" r="0.85" fill="#d870d4" stroke="#c33cbe" stroke-width="0.55"/><circle cx="593.1" cy="293.9" r="0.85" fill="#d870d4" stroke="#c33cbe" stroke-width="0.55"/><circle cx="593.9" cy="293.4" r="0.85" fill="#d870d4" stroke="#c33cbe" stroke-width="0.55"/><circle cx="594.7" cy="294.6" r="0.85" fill="#d870d4" stroke="#c33cbe" stroke-width="0.55"/><circle cx="595.6" cy="294.6" r="0.85" fill="#d870d4" stroke="#c33cbe" stroke-width="0.55"/><circle cx="596.4" cy="294.5" r="0.85" fill="#d870d4" stroke="#c33cbe" stroke-width="0.55"/><circle cx="597.2" cy="294.5" r="0.85" fill="#d870d4" stroke="#c33cbe" stroke-width="0.55"/><circle cx="598.0" cy="293.5" r="0.85" fill="#d870d4" stroke="#c33cbe" stroke-width="0.55"/><circle cx="598.8" cy="293.7" r="0.85" fill="#d870d4" stroke="#c33cbe" stroke-width="0.55"/><circle cx="599.6" cy="294.1" r="0.85" fill="#d870d4" stroke="#c33cbe" stroke-width="0.55"/><circle cx="600.4" cy="293.7" r="0.85" fill="#d870d4" stroke="#c33cbe" stroke-width="0.55"/><circle cx="601.2" cy="293.5" r="0.85" fill="#d870d4" stroke="#c33cbe" stroke-width="0.55"/><circle cx="602.1" cy="294.6" r="0.85" fill="#d870d4" stroke="#c33cbe" stroke-width="0.55"/><circle cx="602.9" cy="293.6" r="0.85" fill="#d870d4" stroke="#c33cbe" stroke-width="0.55"/><circle cx="603.7" cy="294.2" r="0.85" fill="#d870d4" stroke="#c33cbe" stroke-width="0.55"/><circle cx="604.5" cy="293.9" r="0.85" fill="#d870d4" stroke="#c33cbe" stroke-width="0.55"/><circle cx="605.3" cy="294.4" r="0.85" fill="#d870d4" stroke="#c33cbe" stroke-width="0.55"/><circle cx="606.1" cy="294.4" r="0.85" fill="#d870d4" stroke="#c33cbe" stroke-width="0.55"/><circle cx="606.9" cy="294.3" r="0.85" fill="#d870d4" stroke="#c33cbe" stroke-width="0.55"/><circle cx="607.7" cy="294.0" r="0.85" fill="#d870d4" stroke="#c33cbe" stroke-width="0.55"/><circle cx="608.6" cy="293.6" r="0.85" fill="#d870d4" stroke="#c33cbe" stroke-width="0.55"/><circle cx="609.4" cy="293.6" r="0.85" fill="#d870d4" stroke="#c33cbe" stroke-width="0.55"/><circle cx="610.2" cy="294.1" r="0.85" fill="#d870d4" stroke="#c33cbe" stroke-width="0.55"/><circle cx="611.0" cy="293.8" r="0.85" fill="#d870d4" stroke="#c33cbe" stroke-width="0.55"/><circle cx="611.8" cy="294.0" r="0.85" fill="#d870d4" stroke="#c33cbe" stroke-width="0.55"/><circle cx="522.4" cy="348.4" r="2.1" fill="#e84040"/><defs><linearGradient id="sl" x1="0" y1="0" x2="0" y2="1"><stop offset="0" stop-color="#50b6f6"/><stop offset="0.45" stop-color="#2aa9f6"/><stop offset="1" stop-color="#1ea3f5"/></linearGradient></defs><rect x="36" y="392.5" width="566.6" height="6.2" fill="url(#sl)"/><rect x="28.2" y="391.3" width="8" height="8.2" rx="0.8" fill="#eeeeee" stroke="#c4c4c4" stroke-width="0.7"/><rect x="30.8" y="393.8" width="2.8" height="3" fill="#8a8fb0"/><rect x="602.7" y="391.3" width="8" height="8.2" rx="0.8" fill="#eeeeee" stroke="#c4c4c4" stroke-width="0.7"/><rect x="605.3" y="393.8" width="2.8" height="3" fill="#8a8fb0"/></svg>
<div class="t" style="left:-575.80px;width:600px;text-align:right;top:376.48px;font-size:5.3px;line-height:6.36px;color:#6a6a6a;font-weight:normal;">0</div>
<div class="t" style="left:-575.80px;width:600px;text-align:right;top:367.77px;font-size:5.3px;line-height:6.36px;color:#6a6a6a;font-weight:normal;">6</div>
<div class="t" style="left:-575.80px;width:600px;text-align:right;top:359.06px;font-size:5.3px;line-height:6.36px;color:#6a6a6a;font-weight:normal;">12</div>
<div class="t" style="left:-575.80px;width:600px;text-align:right;top:350.35px;font-size:5.3px;line-height:6.36px;color:#6a6a6a;font-weight:normal;">18</div>
<div class="t" style="left:-575.80px;width:600px;text-align:right;top:341.64px;font-size:5.3px;line-height:6.36px;color:#6a6a6a;font-weight:normal;">24</div>
<div class="t" style="left:-575.80px;width:600px;text-align:right;top:332.93px;font-size:5.3px;line-height:6.36px;color:#6a6a6a;font-weight:normal;">30</div>
<div class="t" style="left:-575.80px;width:600px;text-align:right;top:324.22px;font-size:5.3px;line-height:6.36px;color:#6a6a6a;font-weight:normal;">36</div>
<div class="t" style="left:-575.80px;width:600px;text-align:right;top:315.51px;font-size:5.3px;line-height:6.36px;color:#6a6a6a;font-weight:normal;">42</div>
<div class="t" style="left:-575.80px;width:600px;text-align:right;top:306.80px;font-size:5.3px;line-height:6.36px;color:#6a6a6a;font-weight:normal;">48</div>
<div class="t" style="left:-575.80px;width:600px;text-align:right;top:298.09px;font-size:5.3px;line-height:6.36px;color:#6a6a6a;font-weight:normal;">54</div>
<div class="t" style="left:-575.80px;width:600px;text-align:right;top:289.38px;font-size:5.3px;line-height:6.36px;color:#6a6a6a;font-weight:normal;">60</div>
<div class="t" style="left:615.50px;top:376.42px;font-size:5.4px;line-height:6.48px;color:#6a6a6a;font-weight:normal;">0</div>
<div class="t" style="left:615.50px;top:344.62px;font-size:5.4px;line-height:6.48px;color:#6a6a6a;font-weight:normal;">1</div>
<div class="t" style="left:615.50px;top:312.82px;font-size:5.4px;line-height:6.48px;color:#6a6a6a;font-weight:normal;">2</div>
<div class="t" style="left:615.50px;top:281.02px;font-size:5.4px;line-height:6.48px;color:#6a6a6a;font-weight:normal;">3</div>
<div class="t" style="left:28.10px;top:383.85px;font-size:5.0px;line-height:6.00px;color:#777;font-weight:normal;">00:00</div>
<div class="t" style="left:-242.00px;width:600px;text-align:center;top:383.85px;font-size:5.0px;line-height:6.00px;color:#777;font-weight:normal;">00:46</div>
<div class="t" style="left:-212.25px;width:600px;text-align:center;top:383.85px;font-size:5.0px;line-height:6.00px;color:#777;font-weight:normal;">01:32</div>
<div class="t" style="left:-182.50px;width:600px;text-align:center;top:383.85px;font-size:5.0px;line-height:6.00px;color:#777;font-weight:normal;">02:18</div>
<div class="t" style="left:-152.75px;width:600px;text-align:center;top:383.85px;font-size:5.0px;line-height:6.00px;color:#777;font-weight:normal;">03:04</div>
<div class="t" style="left:-123.00px;width:600px;text-align:center;top:383.85px;font-size:5.0px;line-height:6.00px;color:#777;font-weight:normal;">03:50</div>
<div class="t" style="left:-93.25px;width:600px;text-align:center;top:383.85px;font-size:5.0px;line-height:6.00px;color:#777;font-weight:normal;">04:36</div>
<div class="t" style="left:-63.50px;width:600px;text-align:center;top:383.85px;font-size:5.0px;line-height:6.00px;color:#777;font-weight:normal;">05:22</div>
<div class="t" style="left:-33.75px;width:600px;text-align:center;top:383.85px;font-size:5.0px;line-height:6.00px;color:#777;font-weight:normal;">06:08</div>
<div class="t" style="left:-4.00px;width:600px;text-align:center;top:383.85px;font-size:5.0px;line-height:6.00px;color:#777;font-weight:normal;">06:54</div>
<div class="t" style="left:25.75px;width:600px;text-align:center;top:383.85px;font-size:5.0px;line-height:6.00px;color:#777;font-weight:normal;">07:40</div>
<div class="t" style="left:55.50px;width:600px;text-align:center;top:383.85px;font-size:5.0px;line-height:6.00px;color:#777;font-weight:normal;">08:26</div>
<div class="t" style="left:85.25px;width:600px;text-align:center;top:383.85px;font-size:5.0px;line-height:6.00px;color:#777;font-weight:normal;">09:12</div>
<div class="t" style="left:115.00px;width:600px;text-align:center;top:383.85px;font-size:5.0px;line-height:6.00px;color:#777;font-weight:normal;">09:58</div>
<div class="t" style="left:144.75px;width:600px;text-align:center;top:383.85px;font-size:5.0px;line-height:6.00px;color:#777;font-weight:normal;">10:44</div>
<div class="t" style="left:174.50px;width:600px;text-align:center;top:383.85px;font-size:5.0px;line-height:6.00px;color:#777;font-weight:normal;">11:30</div>
<div class="t" style="left:204.25px;width:600px;text-align:center;top:383.85px;font-size:5.0px;line-height:6.00px;color:#777;font-weight:normal;">12:16</div>
<div class="t" style="left:234.00px;width:600px;text-align:center;top:383.85px;font-size:5.0px;line-height:6.00px;color:#777;font-weight:normal;">13:02</div>
<div class="t" style="left:263.75px;width:600px;text-align:center;top:383.85px;font-size:5.0px;line-height:6.00px;color:#777;font-weight:normal;">13:48</div>
<div class="t" style="left:293.50px;width:600px;text-align:center;top:383.85px;font-size:5.0px;line-height:6.00px;color:#777;font-weight:normal;">14:34</div>
<div class="t b" style="left:-288.40px;width:600px;text-align:center;top:333.55px;font-size:5.0px;line-height:6.00px;color:#333;font-weight:bold;transform:rotate(-90deg);">FPS</div>
<div class="t b" style="left:324.00px;width:600px;text-align:center;top:324.15px;font-size:5.0px;line-height:6.00px;color:#333;font-weight:bold;transform:rotate(90deg);">Jank</div>
<div class="t" style="left:211.50px;top:402.21px;font-size:5.6px;line-height:6.72px;color:#999;font-weight:normal;">FPS</div>
<div class="t" style="left:236.00px;top:402.21px;font-size:5.6px;line-height:6.72px;color:#999;font-weight:normal;">InterFrame</div>
<div class="t" style="left:284.00px;top:402.21px;font-size:5.6px;line-height:6.72px;color:#999;font-weight:normal;">SmallJank</div>
<div class="t" style="left:316.00px;top:402.21px;font-size:5.6px;line-height:6.72px;color:#999;font-weight:normal;">Jank</div>
<div class="t" style="left:345.00px;top:402.21px;font-size:5.6px;line-height:6.72px;color:#999;font-weight:normal;">BigJank</div>
<div class="t" style="left:381.00px;top:402.21px;font-size:5.6px;line-height:6.72px;color:#999;font-weight:normal;">Stutter</div>
<div class="t" style="left:414.00px;top:402.21px;font-size:5.6px;line-height:6.72px;color:#999;font-weight:normal;">label</div>
</body></html>
